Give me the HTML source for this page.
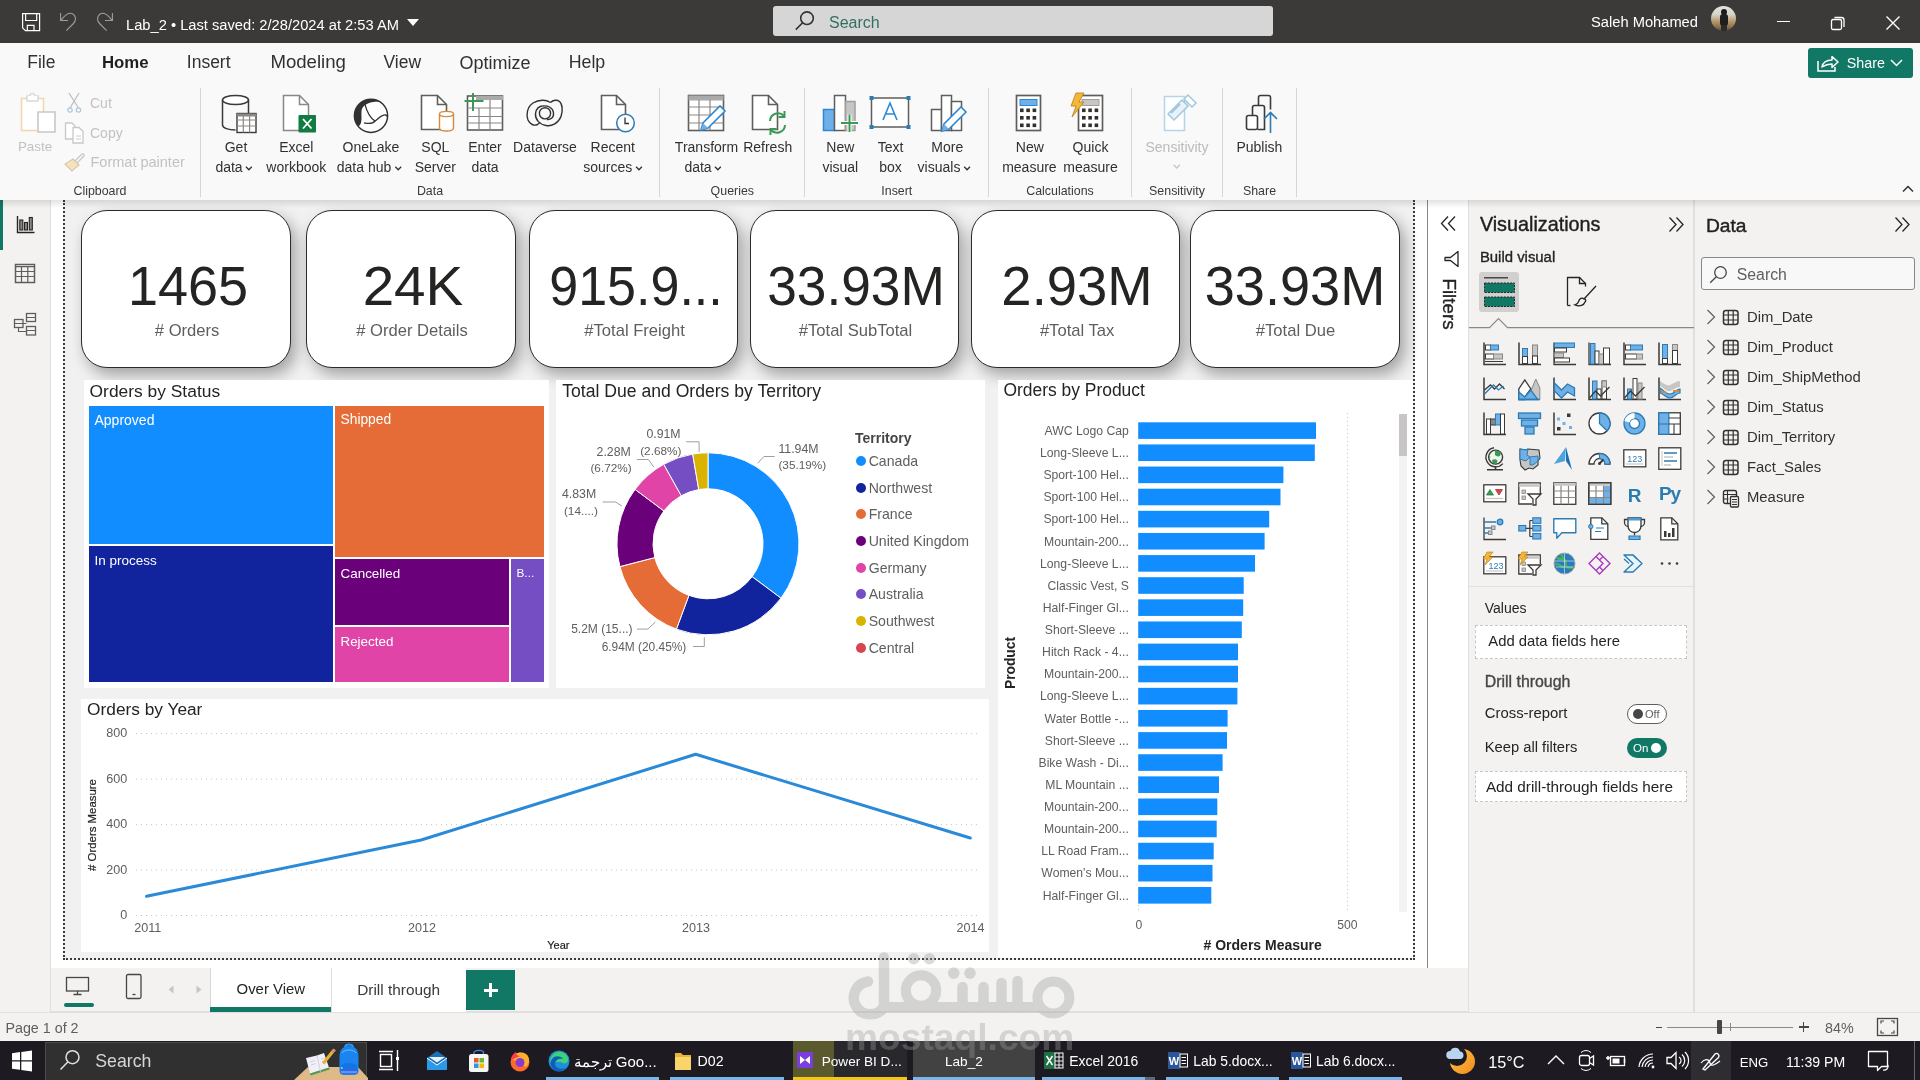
<!DOCTYPE html>
<html><head><meta charset="utf-8">
<style>
*{box-sizing:border-box;margin:0;padding:0}
html,body{width:1920px;height:1080px;overflow:hidden;font-family:"Liberation Sans",sans-serif;background:#fff;position:relative}
.a{position:absolute}
.t{position:absolute;white-space:nowrap;line-height:1}
.c{transform:translateX(-50%)}
.r{transform:translateX(-100%)}
svg{position:absolute;overflow:visible}
body{will-change:transform}

</style></head>
<body>
<div class="a" style="left:0;top:0;width:1920px;height:43px;background:#3b3a39"></div>
 <svg style="left:21px;top:12px" width="20" height="20" viewBox="0 0 20 20" fill="none" stroke="#fff" stroke-width="1.2"><path d="M1.6 1.6h17v17h-14.2l-2.8-2.8z"/><path d="M4.6 1.6v6.9h11.1v-6.9"/><path d="M6.3 18.6v-5.3h6.7v5.3"/></svg>
 <svg style="left:59px;top:12px" width="20" height="20" viewBox="0 0 20 20" fill="none" stroke="#a19f9d" stroke-width="1.1"><path d="M1.6 1v7.5h7.4"/><path d="M1.8 8.3C4 6 7 1.3 11.5 1.3C14.5 1.3 16.5 4 16.5 7C16.5 9 15.5 10.5 14 12L7.3 18.6"/></svg>
 <svg style="left:95px;top:12px" width="20" height="20" viewBox="0 0 20 20" fill="none" stroke="#a19f9d" stroke-width="1.1"><g transform="translate(19 0) scale(-1 1)"><path d="M1.6 1v7.5h7.4"/><path d="M1.8 8.3C4 6 7 1.3 11.5 1.3C14.5 1.3 16.5 4 16.5 7C16.5 9 15.5 10.5 14 12L7.3 18.6"/></g></svg>
 <div class="t" style="left:126px;top:18px;font-size:14.7px;color:#fff">Lab_2 &#8226; Last saved: 2/28/2024 at 2:53 AM</div>
 <svg style="left:407px;top:19px" width="12" height="8" viewBox="0 0 12 8"><path d="M0 0h12l-6 7z" fill="#fff"/></svg>
 <div class="a" style="left:773px;top:6px;width:500px;height:30px;background:#d6d6d6;border-radius:3px"></div>
 <svg style="left:794px;top:10px" width="24" height="22" viewBox="0 0 24 22" fill="none" stroke="#333" stroke-width="1.6"><circle cx="13" cy="8.2" r="6.3"/><path d="M8.6 12.8L1.8 19.6"/></svg>
 <div class="t" style="left:829px;top:14.5px;font-size:16px;color:#336e63">Search</div>
 <div class="t" style="left:1591px;top:14.5px;font-size:14.7px;color:#fff">Saleh Mohamed</div>
 <div class="a" style="left:1711px;top:6px;width:25px;height:25px;border-radius:50%;overflow:hidden;background:linear-gradient(#e4e4e2 0,#d6d2c8 35%,#b89c70 60%,#8a6e48 85%,#5a4a34 100%)"><div class="a" style="left:10px;top:3px;width:6px;height:6px;border-radius:50%;background:#1a1a1a"></div><div class="a" style="left:9px;top:8px;width:8px;height:12px;border-radius:3px;background:#1e1e1e"></div><div class="a" style="left:10px;top:19px;width:6px;height:6px;background:#2a2a2a"></div></div>
 <div class="a" style="left:1777px;top:21px;width:13px;height:1.3px;background:#fff"></div>
 <svg style="left:1830px;top:15px" width="16" height="16" viewBox="0 0 16 16" fill="none" stroke="#fff" stroke-width="1.3"><rect x="1.5" y="4.5" width="10" height="10" rx="1.5"/><path d="M4.5 2.5h7a2.5 2.5 0 0 1 2.5 2.5v7"/></svg>
 <svg style="left:1885px;top:15px" width="16" height="16" viewBox="0 0 16 16" stroke="#fff" stroke-width="1.4"><path d="M1.5 1.5l13 13M14.5 1.5l-13 13"/></svg>

<div class="a" style="left:0px;top:43px;width:1920px;height:157px;background:#f9f9f9;"></div>
<div class="t" style="left:27.3px;top:54.29px;font-size:17.5px;color:#323130;">File</div>
<div class="t" style="left:102.0px;top:54.88px;font-size:16.8px;color:#201f1e;font-weight:bold;">Home</div>
<div class="t" style="left:186.8px;top:54.29px;font-size:17.5px;color:#323130;">Insert</div>
<div class="t" style="left:270.4px;top:53.36px;font-size:18.6px;color:#323130;">Modeling</div>
<div class="t" style="left:383.5px;top:54.29px;font-size:17.5px;color:#323130;">View</div>
<div class="t" style="left:459.5px;top:53.86px;font-size:18.0px;color:#323130;">Optimize</div>
<div class="t" style="left:568.7px;top:54.03px;font-size:17.8px;color:#323130;">Help</div>
<div class="a" style="left:1808px;top:48px;width:105px;height:30px;background:#117865;border-radius:3px"></div>
<svg style="left:1816px;top:54px;" width="24" height="18" viewBox="0 0 24 18"><path d="M2 7v10h17v-4" fill="none" stroke="#fff" stroke-width="1.5"/><path d="M6 13c1-5 5-7 10-7V2.5l6 5.5-6 5.5V10c-4 0-7 1-10 3z" fill="none" stroke="#fff" stroke-width="1.5" stroke-linejoin="round"/></svg>
<div class="t" style="left:1846.7px;top:56.20px;font-size:14.3px;color:#fff;">Share</div>
<svg style="left:1889.5px;top:59px;" width="13" height="8" viewBox="0 0 13 8"><path d="M1 1l5.5 5.5L12 1" fill="none" stroke="#fff" stroke-width="1.5"/></svg>
<div class="a" style="left:200px;top:88px;width:1px;height:109px;background:#d6d6d6;"></div>
<div class="a" style="left:659px;top:88px;width:1px;height:109px;background:#d6d6d6;"></div>
<div class="a" style="left:804px;top:88px;width:1px;height:109px;background:#d6d6d6;"></div>
<div class="a" style="left:988px;top:88px;width:1px;height:109px;background:#d6d6d6;"></div>
<div class="a" style="left:1131px;top:88px;width:1px;height:109px;background:#d6d6d6;"></div>
<div class="a" style="left:1222px;top:88px;width:1px;height:109px;background:#d6d6d6;"></div>
<div class="a" style="left:1296px;top:88px;width:1px;height:109px;background:#d6d6d6;"></div>
<div class="t c" style="left:100.0px;top:184.70px;font-size:12.4px;color:#3b3a39;">Clipboard</div>
<div class="t c" style="left:430.0px;top:184.70px;font-size:12.4px;color:#3b3a39;">Data</div>
<div class="t c" style="left:732.3px;top:184.70px;font-size:12.4px;color:#3b3a39;">Queries</div>
<div class="t c" style="left:896.8px;top:184.70px;font-size:12.4px;color:#3b3a39;">Insert</div>
<div class="t c" style="left:1060.0px;top:184.70px;font-size:12.4px;color:#3b3a39;">Calculations</div>
<div class="t c" style="left:1177.0px;top:184.70px;font-size:12.4px;color:#3b3a39;">Sensitivity</div>
<div class="t c" style="left:1259.5px;top:184.70px;font-size:12.4px;color:#3b3a39;">Share</div>
<svg style="left:18px;top:93px;" width="40" height="42" viewBox="0 0 40 42"><path d="M3.5 5.5h22v32h-22z" fill="#fff" stroke="#f2d6ae" stroke-width="1.6"/><path d="M9 5.5h11v-2.5h-3a2.2 2.2 0 0 0-5 0h-3z" fill="#fff" stroke="#d8d8d8" stroke-width="1.4"/><path d="M9 3v5h11v-5" fill="#fff" stroke="#d8d8d8" stroke-width="1.4"/><path d="M20 19h17v20h-17z" fill="#fff" stroke="#c8c8c8" stroke-width="1.6"/></svg>
<div class="t c" style="left:35.0px;top:140.26px;font-size:13.4px;color:#c4c2c0;">Paste</div>
<svg style="left:66px;top:92px;" width="18" height="22" viewBox="0 0 18 22"><path d="M3 1l9.5 15M13 1L4 16" fill="none" stroke="#bbb" stroke-width="1.2"/><circle cx="4" cy="18" r="2.2" fill="none" stroke="#a9c7dd" stroke-width="1.2"/><circle cx="12.5" cy="18" r="2.2" fill="none" stroke="#a9c7dd" stroke-width="1.2"/></svg>
<div class="t" style="left:90.0px;top:95.75px;font-size:14px;color:#c4c2c0;">Cut</div>
<svg style="left:64px;top:122px;" width="22" height="22" viewBox="0 0 22 22"><path d="M1.5 1h6.5l3 3v13h-9.5z" fill="#fff" stroke="#c8c8c8" stroke-width="1.3"/><path d="M9 5.5h6l4 4v11.5h-10z" fill="#fff" stroke="#c8c8c8" stroke-width="1.3"/><path d="M12 14h5M12 17h5" stroke="#ccc" stroke-width="1"/></svg>
<div class="t" style="left:90.0px;top:125.85px;font-size:14px;color:#c4c2c0;">Copy</div>
<svg style="left:64px;top:152px;" width="22" height="22" viewBox="0 0 22 22"><path d="M11 9l7-7a1.5 1.5 0 0 1 2 2l-7 7" fill="none" stroke="#c8c8c8" stroke-width="1.3"/><path d="M9 7l6 6-7 6-7-7z" fill="#f6e2bd" stroke="#d8c8a8" stroke-width="1.2"/></svg>
<div class="t" style="left:90.5px;top:154.93px;font-size:14.5px;color:#c4c2c0;">Format painter</div>
<svg style="left:220px;top:94px;" width="40" height="42" viewBox="0 0 40 42"><path d="M2.5 6v25c0 3 6 5 13 5" fill="none" stroke="#3b3a39" stroke-width="1.5"/><ellipse cx="15.5" cy="6" rx="13" ry="4.5" fill="#fff" stroke="#3b3a39" stroke-width="1.5"/><path d="M28.5 6v13" stroke="#3b3a39" stroke-width="1.5"/><rect x="17" y="19.5" width="19" height="19" fill="#fff" stroke="#3b3a39" stroke-width="1.4"/><rect x="17" y="19.5" width="19" height="3" fill="#8a8886"/><path d="M17 26h19M17 32h19M23.3 22v16.5M29.6 22v16.5" stroke="#8a8886" stroke-width="1.2"/></svg>
<div class="t c" style="left:236.0px;top:139.75px;font-size:14px;color:#323130;">Get</div>
<div class="t c" style="left:234.0px;top:159.85px;font-size:14px;color:#323130">data<svg style="position:relative;display:inline-block;vertical-align:middle;margin-left:3px" width="7" height="5" viewBox="0 0 7 5"><path d="M0.6 0.8L3.5 3.8L6.4 0.8" fill="none" stroke="#323130" stroke-width="1.3"/></svg></div>
<svg style="left:282px;top:94px;" width="36" height="40" viewBox="0 0 36 40"><path d="M1.5 1.5h16l9 9v26h-25z" fill="#fff" stroke="#8a8886" stroke-width="1.5"/><path d="M17.5 1.5v9h9" fill="none" stroke="#8a8886" stroke-width="1.5"/><rect x="16.5" y="21" width="17.5" height="17.5" rx="1" fill="#107c41"/><path d="M21 25l8.5 9.5M29.5 25l-8.5 9.5" stroke="#fff" stroke-width="1.8"/></svg>
<div class="t c" style="left:296.3px;top:139.75px;font-size:14px;color:#323130;">Excel</div>
<div class="t c" style="left:296.3px;top:159.85px;font-size:14px;color:#323130;">workbook</div>
<svg style="left:0;top:0" width="1920" height="200" viewBox="0 0 1920 200"><circle cx="371" cy="115.8" r="16.6" fill="#fff" stroke="#323130" stroke-width="1.5"/><path d="M379.5 101.5A16.6 16.6 0 0 0 358.3 126.5C363 124 361 116 361.5 111C362 106 367 101.5 379.5 101.5z" fill="#323130"/><path d="M364.8 103.8C367 112 370 118 375 121C379 118 382 114.5 385.5 115C387 115.3 387.5 116 387.5 117" fill="none" stroke="#323130" stroke-width="1.3"/><path d="M364 122.8C369 124 373 123.5 375 121" fill="none" stroke="#323130" stroke-width="1.3"/></svg>
<div class="t c" style="left:371.0px;top:139.75px;font-size:14px;color:#323130;">OneLake</div>
<div class="t c" style="left:369.0px;top:159.85px;font-size:14px;color:#323130">data hub<svg style="position:relative;display:inline-block;vertical-align:middle;margin-left:3px" width="7" height="5" viewBox="0 0 7 5"><path d="M0.6 0.8L3.5 3.8L6.4 0.8" fill="none" stroke="#323130" stroke-width="1.3"/></svg></div>
<svg style="left:420px;top:94px;" width="38" height="40" viewBox="0 0 38 40"><path d="M1.5 1.5h16l9 9v25h-25z" fill="#fff" stroke="#605e5c" stroke-width="1.6"/><path d="M17.5 1.5v9h9" fill="none" stroke="#605e5c" stroke-width="1.6"/><path d="M19.5 20v14c0 2 3.5 3 7 3s7-1 7-3V20" fill="#fff" stroke="#d48c3c" stroke-width="1.4"/><ellipse cx="26.5" cy="20" rx="7" ry="2.6" fill="#fff" stroke="#d48c3c" stroke-width="1.4"/></svg>
<div class="t c" style="left:435.3px;top:139.75px;font-size:14px;color:#323130;">SQL</div>
<div class="t c" style="left:435.3px;top:159.85px;font-size:14px;color:#323130;">Server</div>
<svg style="left:463px;top:92px;" width="44" height="42" viewBox="0 0 44 42"><rect x="4.5" y="4" width="35" height="34" fill="#fff" stroke="#605e5c" stroke-width="1.6"/><rect x="13" y="4" width="27" height="4" fill="#aaa"/><path d="M4.5 16h35M4.5 24.5h35M4.5 31h35M16 16v22M27 16v22M27 8v8" stroke="#8a8886" stroke-width="1.2"/><path d="M1.5 9h19M10 1v18" stroke="#3a9a54" stroke-width="2"/></svg>
<div class="t c" style="left:485.0px;top:139.75px;font-size:14px;color:#323130;">Enter</div>
<div class="t c" style="left:485.0px;top:159.85px;font-size:14px;color:#323130;">data</div>
<svg style="left:520px;top:92px;" width="50" height="42" viewBox="0 0 50 42"><g fill="none" stroke="#323130" stroke-width="1.4"><path d="M30.5 10.5C26 7.5 19 7.5 13 11C7 15 6 23 8 28C10 32.5 14 34 17.5 32.5L19.5 31"/><path d="M30.5 10.5C33 8 37 7.5 39.5 9.5C42.5 12 43 19 41 24.5C38.5 31 32 34.5 26 33.5C19.5 32.5 15 27.5 15.5 21.5C16 16.5 19.5 14 22.5 14"/><path d="M22.5 14C28 13.5 33 15.5 33.5 21C34 26 30 28 27 27.5"/><circle cx="25" cy="21.3" r="5.6"/></g></svg>
<div class="t c" style="left:545.0px;top:139.75px;font-size:14px;color:#323130;">Dataverse</div>
<svg style="left:600px;top:94px;" width="38" height="40" viewBox="0 0 38 40"><path d="M1.5 1.5h15l9 9v25h-24z" fill="#fff" stroke="#605e5c" stroke-width="1.6"/><path d="M16.5 1.5v9h9" fill="none" stroke="#605e5c" stroke-width="1.6"/><circle cx="25.5" cy="29" r="8.8" fill="#fff" stroke="#2b7cb3" stroke-width="1.5"/><path d="M25 23.5v6h4" fill="none" stroke="#323130" stroke-width="1.3"/></svg>
<div class="t c" style="left:612.8px;top:139.75px;font-size:14px;color:#323130;">Recent</div>
<div class="t c" style="left:612.8px;top:159.85px;font-size:14px;color:#323130">sources<svg style="position:relative;display:inline-block;vertical-align:middle;margin-left:3px" width="7" height="5" viewBox="0 0 7 5"><path d="M0.6 0.8L3.5 3.8L6.4 0.8" fill="none" stroke="#323130" stroke-width="1.3"/></svg></div>
<svg style="left:686px;top:93px;" width="42" height="42" viewBox="0 0 42 42"><rect x="2.5" y="2.5" width="35" height="35" fill="#fff" stroke="#605e5c" stroke-width="1.6"/><rect x="2.5" y="2.5" width="35" height="5" fill="#aaa"/><path d="M2.5 14h35M2.5 22h35M2.5 30h35M13 7v30M24 7v30" stroke="#8a8886" stroke-width="1.2"/><path d="M15 37l2-7 17-17 5 5-17 17z" fill="#fff" stroke="#2b88d8" stroke-width="1.6"/><path d="M15 37l2-7 5 5z" fill="#70b0e8"/></svg>
<div class="t c" style="left:706.5px;top:139.75px;font-size:14px;color:#323130;">Transform</div>
<div class="t c" style="left:703.0px;top:159.85px;font-size:14px;color:#323130">data<svg style="position:relative;display:inline-block;vertical-align:middle;margin-left:3px" width="7" height="5" viewBox="0 0 7 5"><path d="M0.6 0.8L3.5 3.8L6.4 0.8" fill="none" stroke="#323130" stroke-width="1.3"/></svg></div>
<svg style="left:751px;top:94px;" width="38" height="40" viewBox="0 0 38 40"><path d="M1.5 1.5h16l9 9v25h-25z" fill="#fff" stroke="#605e5c" stroke-width="1.6"/><path d="M17.5 1.5v9h9" fill="none" stroke="#605e5c" stroke-width="1.6"/><path d="M19 27a8 8 0 0 1 14-5M34 31a8 8 0 0 1-14 5" fill="none" stroke="#3a9a54" stroke-width="2"/><path d="M33.5 17v6h-6M19.5 41v-6h6" fill="none" stroke="#3a9a54" stroke-width="2"/></svg>
<div class="t c" style="left:767.7px;top:139.75px;font-size:14px;color:#323130;">Refresh</div>
<svg style="left:822px;top:94px;" width="38" height="40" viewBox="0 0 38 40"><rect x="1.5" y="15.5" width="11" height="21" fill="#70b0e8" stroke="#2b88d8" stroke-width="1.5"/><rect x="12.5" y="1.5" width="11" height="35" fill="#fff" stroke="#605e5c" stroke-width="1.5"/><rect x="23.5" y="7.5" width="9.5" height="29" fill="#c8c6c4" stroke="#a19f9d" stroke-width="1.5"/><path d="M19 29h17M27.5 20.5v17.5" stroke="#fff" stroke-width="4"/><path d="M19 29h17M27.5 20.5v17.5" stroke="#3a9a54" stroke-width="2"/></svg>
<div class="t c" style="left:840.3px;top:139.75px;font-size:14px;color:#323130;">New</div>
<div class="t c" style="left:840.3px;top:159.85px;font-size:14px;color:#323130;">visual</div>
<svg style="left:869px;top:96px;" width="42" height="34" viewBox="0 0 42 34"><rect x="2.5" y="2" width="37" height="29" fill="#fff" stroke="#605e5c" stroke-width="1.5"/><rect x="0.5" y="0" width="4" height="4" fill="#2b7cb3"/><rect x="37.5" y="0" width="4" height="4" fill="#2b7cb3"/><rect x="0.5" y="29" width="4" height="4" fill="#2b7cb3"/><rect x="37.5" y="29" width="4" height="4" fill="#2b7cb3"/><path d="M14 24l7-17 7 17M16.5 18h9" fill="none" stroke="#2b88d8" stroke-width="1.6"/></svg>
<div class="t c" style="left:890.5px;top:139.75px;font-size:14px;color:#323130;">Text</div>
<div class="t c" style="left:890.5px;top:159.85px;font-size:14px;color:#323130;">box</div>
<svg style="left:930px;top:94px;" width="40" height="40" viewBox="0 0 40 40"><rect x="1.5" y="15.5" width="10" height="21" fill="#fff" stroke="#605e5c" stroke-width="1.5"/><rect x="11.5" y="1.5" width="10" height="35" fill="#fff" stroke="#605e5c" stroke-width="1.5"/><rect x="21.5" y="7.5" width="10" height="29" fill="#fff" stroke="#605e5c" stroke-width="1.5"/><path d="M12 37l2-7 17-17 5 5-17 17z" fill="#fff" stroke="#2b88d8" stroke-width="1.6"/><path d="M12 37l2-7 5 5z" fill="#70b0e8"/></svg>
<div class="t c" style="left:947.3px;top:139.75px;font-size:14px;color:#323130;">More</div>
<div class="t c" style="left:944.0px;top:159.85px;font-size:14px;color:#323130">visuals<svg style="position:relative;display:inline-block;vertical-align:middle;margin-left:3px" width="7" height="5" viewBox="0 0 7 5"><path d="M0.6 0.8L3.5 3.8L6.4 0.8" fill="none" stroke="#323130" stroke-width="1.3"/></svg></div>
<svg style="left:1015px;top:94px;" width="28" height="40" viewBox="0 0 28 40"><rect x="1.5" y="1.5" width="24" height="35" fill="#fff" stroke="#605e5c" stroke-width="1.7"/><rect x="5" y="5.5" width="17" height="6" fill="#70b0e8" stroke="#2b88d8" stroke-width="1"/><rect x="5.0" y="14.5" width="3.6" height="3.6" fill="#323130"/><rect x="11.3" y="14.5" width="3.6" height="3.6" fill="#323130"/><rect x="17.6" y="14.5" width="3.6" height="3.6" fill="#323130"/><rect x="5.0" y="22.0" width="3.6" height="3.6" fill="#323130"/><rect x="11.3" y="22.0" width="3.6" height="3.6" fill="#323130"/><rect x="17.6" y="22.0" width="3.6" height="3.6" fill="#323130"/><rect x="5.0" y="29.5" width="3.6" height="3.6" fill="#323130"/><rect x="11.3" y="29.5" width="3.6" height="3.6" fill="#323130"/><rect x="17.6" y="29.5" width="3.6" height="3.6" fill="#323130"/></svg>
<div class="t c" style="left:1029.8px;top:139.75px;font-size:14px;color:#323130;">New</div>
<div class="t c" style="left:1029.4px;top:159.85px;font-size:14px;color:#323130;">measure</div>
<svg style="left:1068px;top:92px;" width="36" height="42" viewBox="0 0 36 42"><rect x="10.5" y="3.5" width="24" height="35" fill="#fff" stroke="#605e5c" stroke-width="1.7"/><rect x="14" y="7.5" width="17" height="6" fill="#c8c6c4" stroke="#a19f9d" stroke-width="1"/><rect x="14.0" y="16.5" width="3.6" height="3.6" fill="#323130"/><rect x="20.3" y="16.5" width="3.6" height="3.6" fill="#323130"/><rect x="26.6" y="16.5" width="3.6" height="3.6" fill="#323130"/><rect x="14.0" y="24.0" width="3.6" height="3.6" fill="#323130"/><rect x="20.3" y="24.0" width="3.6" height="3.6" fill="#323130"/><rect x="26.6" y="24.0" width="3.6" height="3.6" fill="#323130"/><rect x="14.0" y="31.5" width="3.6" height="3.6" fill="#323130"/><rect x="20.3" y="31.5" width="3.6" height="3.6" fill="#323130"/><rect x="26.6" y="31.5" width="3.6" height="3.6" fill="#323130"/><path d="M8 1h8l-5 9h5l-12 15 4-11h-5z" fill="#f2b63a" stroke="#c07c10" stroke-width="0.8"/></svg>
<div class="t c" style="left:1090.5px;top:139.75px;font-size:14px;color:#323130;">Quick</div>
<div class="t c" style="left:1090.5px;top:159.85px;font-size:14px;color:#323130;">measure</div>
<svg style="left:1161px;top:92px;" width="38" height="42" viewBox="0 0 38 42"><path d="M3.5 4.5h20v34h-20z" fill="#fff" stroke="#b5d6e8" stroke-width="1.6"/><path d="M7 22l14-14 6 6-14 14z" fill="#e8f2f8" stroke="#9fc8de" stroke-width="1.5"/><path d="M10 21l9-9" stroke="#9fc8de" stroke-width="2"/><path d="M23 7l4-4 8 8-4 4z" fill="#fff" stroke="#9fc8de" stroke-width="1.5"/></svg>
<div class="t c" style="left:1177.0px;top:139.75px;font-size:14px;color:#bdbbb9;">Sensitivity</div>
<svg style="left:1173px;top:164px;" width="8" height="6" viewBox="0 0 8 6"><path d="M0.6 0.8L3.8 4L7 0.8" fill="none" stroke="#c8c6c4" stroke-width="1.3"/></svg>
<svg style="left:1244px;top:94px;" width="38" height="42" viewBox="0 0 38 42"><rect x="2.5" y="21.5" width="11" height="14" rx="2" fill="#fff" stroke="#3b3a39" stroke-width="1.6"/><path d="M8.5 21.5v-8a2 2 0 0 1 2-2h8a2 2 0 0 1 2 2v22h-7" fill="none" stroke="#3b3a39" stroke-width="1.6"/><path d="M14.5 11.5v-8a2 2 0 0 1 2-2h8a2 2 0 0 1 2 2v12" fill="none" stroke="#3b3a39" stroke-width="1.6"/><path d="M26.5 39v-20M20 25l6.5-6.5 6.5 6.5" fill="none" stroke="#2b7cb3" stroke-width="1.6"/></svg>
<div class="t c" style="left:1259.4px;top:139.75px;font-size:14px;color:#323130;">Publish</div>
<svg style="left:1902px;top:185px;" width="12" height="8" viewBox="0 0 12 8"><path d="M1 6.5l5-5 5 5" fill="none" stroke="#323130" stroke-width="1.5"/></svg>
<div class="a" style="left:0px;top:200px;width:51px;height:812px;background:#f3f2f1;border-right:1px solid #e1dfdd"></div>
<div class="a" style="left:0px;top:200px;width:3px;height:50px;background:#117865;"></div>
<svg style="left:16px;top:215px;" width="20" height="20" viewBox="0 0 20 20"><path d="M1.5 1v16.5h17" fill="none" stroke="#252423" stroke-width="1.4"/><rect x="3.8" y="5" width="3" height="10" fill="#8a8886" stroke="#252423" stroke-width="1.1"/><rect x="8.5" y="7.5" width="3" height="7.5" fill="#8a8886" stroke="#252423" stroke-width="1.1"/><rect x="13.3" y="2.5" width="3" height="12.5" fill="#8a8886" stroke="#252423" stroke-width="1.1"/></svg>
<svg style="left:14px;top:263px;" width="22" height="21" viewBox="0 0 22 21"><rect x="1.5" y="1.5" width="19" height="18" fill="none" stroke="#605e5c" stroke-width="1.5"/><path d="M1.5 3.6h19M1.5 8.5h19M1.5 13.5h19M7.5 3.6v16M13.8 3.6v16" stroke="#605e5c" stroke-width="1.2"/></svg>
<svg style="left:13px;top:312px;" width="25" height="25" viewBox="0 0 25 25"><rect x="1.5" y="7.5" width="8.5" height="8" fill="none" stroke="#605e5c" stroke-width="1.3"/><rect x="13.5" y="1.5" width="9" height="8" fill="none" stroke="#605e5c" stroke-width="1.3"/><rect x="13.5" y="14.5" width="9" height="8.5" fill="none" stroke="#605e5c" stroke-width="1.3"/><path d="M1.5 11.5h8.5M13.5 5.5h9M13.5 18.5h9M10 11.5h3.5M5.5 15.5v4h8" fill="none" stroke="#605e5c" stroke-width="1.1"/></svg>
<div class="a" style="left:51px;top:200px;width:1376px;height:768px;background:#ffffff;"></div>
<div class="a" style="left:63px;top:200px;width:1352px;height:760px;background:#f1f1f1;border:2px dotted #3a3a3a;border-top:none"></div>
<div class="a" style="left:81px;top:210px;width:210px;height:158px;background:#fff;border:1.5px solid #2b2b2b;border-radius:26px;box-shadow:5px 7px 15px rgba(0,0,0,0.33)"></div>
<div class="a" style="left:306px;top:210px;width:210px;height:158px;background:#fff;border:1.5px solid #2b2b2b;border-radius:26px;box-shadow:5px 7px 15px rgba(0,0,0,0.33)"></div>
<div class="a" style="left:529px;top:210px;width:209px;height:158px;background:#fff;border:1.5px solid #2b2b2b;border-radius:26px;box-shadow:5px 7px 15px rgba(0,0,0,0.33)"></div>
<div class="a" style="left:750px;top:210px;width:209px;height:158px;background:#fff;border:1.5px solid #2b2b2b;border-radius:26px;box-shadow:5px 7px 15px rgba(0,0,0,0.33)"></div>
<div class="a" style="left:971px;top:210px;width:209px;height:158px;background:#fff;border:1.5px solid #2b2b2b;border-radius:26px;box-shadow:5px 7px 15px rgba(0,0,0,0.33)"></div>
<div class="a" style="left:1190px;top:210px;width:210px;height:158px;background:#fff;border:1.5px solid #2b2b2b;border-radius:26px;box-shadow:5px 7px 15px rgba(0,0,0,0.33)"></div>
<div class="t" style="left:188px;top:258.93px;font-size:55.6px;color:#252423;transform:translateX(-50%) scaleX(0.972)">1465</div>
<div class="t c" style="left:187.1px;top:322.55px;font-size:16.6px;color:#605e5c;"># Orders</div>
<div class="t" style="left:412.7px;top:258.93px;font-size:55.6px;color:#252423;transform:translateX(-50%) scaleX(1.018)">24K</div>
<div class="t c" style="left:412.0px;top:322.55px;font-size:16.6px;color:#605e5c;"># Order Details</div>
<div class="t" style="left:635.5px;top:258.93px;font-size:55.6px;color:#252423;transform:translateX(-50%) scaleX(0.936)">915.9...</div>
<div class="t c" style="left:634.6px;top:322.55px;font-size:16.6px;color:#605e5c;">#Total Freight</div>
<div class="t" style="left:855.5px;top:258.93px;font-size:55.6px;color:#252423;transform:translateX(-50%) scaleX(0.958)">33.93M</div>
<div class="t c" style="left:855.5px;top:322.55px;font-size:16.6px;color:#605e5c;">#Total SubTotal</div>
<div class="t" style="left:1076.7px;top:258.93px;font-size:55.6px;color:#252423;transform:translateX(-50%) scaleX(0.979)">2.93M</div>
<div class="t c" style="left:1077.1px;top:322.55px;font-size:16.6px;color:#605e5c;">#Total Tax</div>
<div class="t" style="left:1295.1px;top:258.93px;font-size:55.6px;color:#252423;transform:translateX(-50%) scaleX(0.974)">33.93M</div>
<div class="t c" style="left:1295.5px;top:322.55px;font-size:16.6px;color:#605e5c;">#Total Due</div>
<div class="a" style="left:83.5px;top:380px;width:465.5px;height:308px;background:#fff;"></div>
<div class="a" style="left:556px;top:380px;width:428.8px;height:308.1px;background:#fff;"></div>
<div class="a" style="left:997.5px;top:380px;width:415.5px;height:578px;background:#fff;"></div>
<div class="a" style="left:80.7px;top:698.9px;width:908.6px;height:253.3px;background:#fff;"></div>
<div class="t" style="left:89.6px;top:382.77px;font-size:17.4px;color:#252423;">Orders by Status</div>
<div class="t" style="left:562.2px;top:382.60px;font-size:17.6px;color:#252423;">Total Due and Orders by Territory</div>
<div class="t" style="left:1003.4px;top:382.23px;font-size:17.45px;color:#252423;">Orders by Product</div>
<div class="a" style="left:89px;top:406px;width:454.5px;height:276.5px;background:#fff;"></div>
<div class="a" style="left:89px;top:406px;width:243.9px;height:138px;background:#118dff;"></div>
<div class="t" style="left:94.5px;top:413.15px;font-size:14px;color:#fff;">Approved</div>
<div class="a" style="left:89px;top:546px;width:243.9px;height:136.3px;background:#12239e;"></div>
<div class="t" style="left:94.5px;top:553.57px;font-size:13.5px;color:#fff;">In process</div>
<div class="a" style="left:335px;top:406px;width:208.5px;height:151px;background:#e66c37;"></div>
<div class="t" style="left:340.5px;top:413.32px;font-size:13.8px;color:#fff;">Shipped</div>
<div class="a" style="left:335px;top:559px;width:174px;height:65.6px;background:#6b007b;"></div>
<div class="t" style="left:340.5px;top:566.61px;font-size:13.45px;color:#fff;">Cancelled</div>
<div class="a" style="left:335px;top:627px;width:174px;height:55.3px;background:#e044a7;"></div>
<div class="t" style="left:340.5px;top:634.66px;font-size:13.4px;color:#fff;">Rejected</div>
<div class="a" style="left:511px;top:559px;width:32.5px;height:123.3px;background:#744ec2;"></div>
<div class="t" style="left:516.5px;top:568.01px;font-size:11.8px;color:#fff;">B...</div>
<svg style="left:0;top:0" width="1920" height="1080" viewBox="0 0 1920 1080"><path d="M708.00 452.80A91 91 0 0 1 780.98 598.16L752.11 576.66A55 55 0 0 0 708.00 488.80Z" fill="#118dff" stroke="#fff" stroke-width="1"/><path d="M780.98 598.16A91 91 0 0 1 676.42 629.15L688.91 595.38A55 55 0 0 0 752.11 576.66Z" fill="#12239e" stroke="#fff" stroke-width="1"/><path d="M676.42 629.15A91 91 0 0 1 619.90 566.60L654.75 557.58A55 55 0 0 0 688.91 595.38Z" fill="#e66c37" stroke="#fff" stroke-width="1"/><path d="M619.90 566.60A91 91 0 0 1 635.06 489.39L663.91 510.92A55 55 0 0 0 654.75 557.58Z" fill="#6b007b" stroke="#fff" stroke-width="1"/><path d="M635.06 489.39A91 91 0 0 1 663.76 464.28L681.26 495.74A55 55 0 0 0 663.91 510.92Z" fill="#e044a7" stroke="#fff" stroke-width="1"/><path d="M663.76 464.28A91 91 0 0 1 692.69 454.10L698.75 489.58A55 55 0 0 0 681.26 495.74Z" fill="#744ec2" stroke="#fff" stroke-width="1"/><path d="M692.69 454.10A91 91 0 0 1 708.00 452.80L708.00 488.80A55 55 0 0 0 698.75 489.58Z" fill="#d9b300" stroke="#fff" stroke-width="1"/><polyline points="757.8,463.2 763.9,456.5 774.6,456.5" fill="none" stroke="#a19f9d" stroke-width="1"/><polyline points="686,441.8 699.1,441.8 699.1,451.9" fill="none" stroke="#a19f9d" stroke-width="1"/><polyline points="637,459.5 648.4,459.5 653.9,467.2" fill="none" stroke="#a19f9d" stroke-width="1"/><polyline points="602.6,502 615.7,502 621.8,506" fill="none" stroke="#a19f9d" stroke-width="1"/><polyline points="637,629.1 647.8,629.1 655.4,622" fill="none" stroke="#a19f9d" stroke-width="1"/><polyline points="693,646.5 704.3,646.5 704.3,637.3" fill="none" stroke="#a19f9d" stroke-width="1"/></svg>
<div class="t" style="left:778.4px;top:442.69px;font-size:12.3px;color:#605e5c;">11.94M</div>
<div class="t" style="left:778.4px;top:460.21px;font-size:11.8px;color:#605e5c;">(35.19%)</div>
<div class="t" style="left:646.4px;top:428.29px;font-size:12.3px;color:#605e5c;">0.91M</div>
<div class="t" style="left:640.2px;top:445.51px;font-size:11.8px;color:#605e5c;">(2.68%)</div>
<div class="t" style="left:596.6px;top:446.09px;font-size:12.3px;color:#605e5c;">2.28M</div>
<div class="t" style="left:590.4px;top:463.31px;font-size:11.8px;color:#605e5c;">(6.72%)</div>
<div class="t" style="left:562.0px;top:488.49px;font-size:12.3px;color:#605e5c;">4.83M</div>
<div class="t" style="left:563.9px;top:506.01px;font-size:11.8px;color:#605e5c;">(14....)</div>
<div class="t" style="left:571.2px;top:623.24px;font-size:12px;color:#605e5c;">5.2M (15...)</div>
<div class="t" style="left:601.7px;top:641.63px;font-size:11.9px;color:#605e5c;">6.94M (20.45%)</div>
<div class="t" style="left:855.0px;top:431.45px;font-size:14px;color:#484644;font-weight:bold;">Territory</div>
<div class="a" style="left:855.7px;top:456px;width:10px;height:10px;background:#118dff;border-radius:50%"></div>
<div class="t" style="left:868.7px;top:454.26px;font-size:14.1px;color:#605e5c;">Canada</div>
<div class="a" style="left:855.7px;top:482.6px;width:10px;height:10px;background:#12239e;border-radius:50%"></div>
<div class="t" style="left:868.7px;top:480.86px;font-size:14.1px;color:#605e5c;">Northwest</div>
<div class="a" style="left:855.7px;top:509.20000000000005px;width:10px;height:10px;background:#e66c37;border-radius:50%"></div>
<div class="t" style="left:868.7px;top:507.46px;font-size:14.1px;color:#605e5c;">France</div>
<div class="a" style="left:855.7px;top:535.5px;width:10px;height:10px;background:#6b007b;border-radius:50%"></div>
<div class="t" style="left:868.7px;top:533.76px;font-size:14.1px;color:#605e5c;">United Kingdom</div>
<div class="a" style="left:855.7px;top:562.7px;width:10px;height:10px;background:#e044a7;border-radius:50%"></div>
<div class="t" style="left:868.7px;top:560.96px;font-size:14.1px;color:#605e5c;">Germany</div>
<div class="a" style="left:855.7px;top:589px;width:10px;height:10px;background:#744ec2;border-radius:50%"></div>
<div class="t" style="left:868.7px;top:587.26px;font-size:14.1px;color:#605e5c;">Australia</div>
<div class="a" style="left:855.7px;top:616.1px;width:10px;height:10px;background:#d9b300;border-radius:50%"></div>
<div class="t" style="left:868.7px;top:614.36px;font-size:14.1px;color:#605e5c;">Southwest</div>
<div class="a" style="left:855.7px;top:643px;width:10px;height:10px;background:#d64550;border-radius:50%"></div>
<div class="t" style="left:868.7px;top:641.26px;font-size:14.1px;color:#605e5c;">Central</div>
<div class="t r" style="left:1128.8px;top:424.87px;font-size:12.2px;color:#605e5c;">AWC Logo Cap</div>
<div class="t r" style="left:1128.8px;top:447.00px;font-size:12.2px;color:#605e5c;">Long-Sleeve L...</div>
<div class="t r" style="left:1128.8px;top:469.13px;font-size:12.2px;color:#605e5c;">Sport-100 Hel...</div>
<div class="t r" style="left:1128.8px;top:491.26px;font-size:12.2px;color:#605e5c;">Sport-100 Hel...</div>
<div class="t r" style="left:1128.8px;top:513.39px;font-size:12.2px;color:#605e5c;">Sport-100 Hel...</div>
<div class="t r" style="left:1128.8px;top:535.52px;font-size:12.2px;color:#605e5c;">Mountain-200...</div>
<div class="t r" style="left:1128.8px;top:557.65px;font-size:12.2px;color:#605e5c;">Long-Sleeve L...</div>
<div class="t r" style="left:1128.8px;top:579.78px;font-size:12.2px;color:#605e5c;">Classic Vest, S</div>
<div class="t r" style="left:1128.8px;top:601.91px;font-size:12.2px;color:#605e5c;">Half-Finger Gl...</div>
<div class="t r" style="left:1128.8px;top:624.04px;font-size:12.2px;color:#605e5c;">Short-Sleeve ...</div>
<div class="t r" style="left:1128.8px;top:646.17px;font-size:12.2px;color:#605e5c;">Hitch Rack - 4...</div>
<div class="t r" style="left:1128.8px;top:668.30px;font-size:12.2px;color:#605e5c;">Mountain-200...</div>
<div class="t r" style="left:1128.8px;top:690.43px;font-size:12.2px;color:#605e5c;">Long-Sleeve L...</div>
<div class="t r" style="left:1128.8px;top:712.56px;font-size:12.2px;color:#605e5c;">Water Bottle -...</div>
<div class="t r" style="left:1128.8px;top:734.69px;font-size:12.2px;color:#605e5c;">Short-Sleeve ...</div>
<div class="t r" style="left:1128.8px;top:756.82px;font-size:12.2px;color:#605e5c;">Bike Wash - Di...</div>
<div class="t r" style="left:1128.8px;top:778.95px;font-size:12.2px;color:#605e5c;">ML Mountain ...</div>
<div class="t r" style="left:1128.8px;top:801.08px;font-size:12.2px;color:#605e5c;">Mountain-200...</div>
<div class="t r" style="left:1128.8px;top:823.21px;font-size:12.2px;color:#605e5c;">Mountain-200...</div>
<div class="t r" style="left:1128.8px;top:845.34px;font-size:12.2px;color:#605e5c;">LL Road Fram...</div>
<div class="t r" style="left:1128.8px;top:867.47px;font-size:12.2px;color:#605e5c;">Women's Mou...</div>
<div class="t r" style="left:1128.8px;top:889.60px;font-size:12.2px;color:#605e5c;">Half-Finger Gl...</div>
<svg style="left:0;top:0" width="1920" height="1080" viewBox="0 0 1920 1080"><line x1="1347.4" y1="413" x2="1347.4" y2="913" stroke="#c8c6c4" stroke-width="1" stroke-dasharray="1 3"/><line x1="1138.5" y1="905" x2="1138.5" y2="913" stroke="#c8c6c4" stroke-width="1" stroke-dasharray="1 3"/><rect x="1138.2" y="422.30" width="177.8" height="16.6" fill="#118dff"/><rect x="1138.2" y="444.43" width="176.6" height="16.6" fill="#118dff"/><rect x="1138.2" y="466.56" width="145.2" height="16.6" fill="#118dff"/><rect x="1138.2" y="488.69" width="142.3" height="16.6" fill="#118dff"/><rect x="1138.2" y="510.82" width="131.0" height="16.6" fill="#118dff"/><rect x="1138.2" y="532.95" width="126.4" height="16.6" fill="#118dff"/><rect x="1138.2" y="555.08" width="116.8" height="16.6" fill="#118dff"/><rect x="1138.2" y="577.21" width="105.5" height="16.6" fill="#118dff"/><rect x="1138.2" y="599.34" width="105.0" height="16.6" fill="#118dff"/><rect x="1138.2" y="621.47" width="103.6" height="16.6" fill="#118dff"/><rect x="1138.2" y="643.60" width="99.8" height="16.6" fill="#118dff"/><rect x="1138.2" y="665.73" width="99.8" height="16.6" fill="#118dff"/><rect x="1138.2" y="687.86" width="99.2" height="16.6" fill="#118dff"/><rect x="1138.2" y="709.99" width="89.4" height="16.6" fill="#118dff"/><rect x="1138.2" y="732.12" width="88.8" height="16.6" fill="#118dff"/><rect x="1138.2" y="754.25" width="84.4" height="16.6" fill="#118dff"/><rect x="1138.2" y="776.38" width="80.8" height="16.6" fill="#118dff"/><rect x="1138.2" y="798.51" width="79.1" height="16.6" fill="#118dff"/><rect x="1138.2" y="820.64" width="78.5" height="16.6" fill="#118dff"/><rect x="1138.2" y="842.77" width="75.5" height="16.6" fill="#118dff"/><rect x="1138.2" y="864.90" width="74.3" height="16.6" fill="#118dff"/><rect x="1138.2" y="887.03" width="73.1" height="16.6" fill="#118dff"/></svg>
<div class="t c" style="left:1138.9px;top:918.77px;font-size:12.2px;color:#605e5c;">0</div>
<div class="t c" style="left:1347.4px;top:918.77px;font-size:12.2px;color:#605e5c;">500</div>
<div class="t c" style="left:1262.7px;top:937.95px;font-size:14px;color:#252423;font-weight:bold;"># Orders Measure</div>
<div class="t" style="left:1011px;top:662.5px;font-size:13.8px;color:#252423;font-weight:bold;transform:translate(-50%,-50%) rotate(-90deg)">Product</div>
<div class="a" style="left:1399px;top:414px;width:8px;height:498px;background:#f3f3f3;"></div>
<div class="a" style="left:1399px;top:414px;width:8px;height:42px;background:#c8c6c4;"></div>
<div class="t" style="left:87.1px;top:701.06px;font-size:17.3px;color:#252423;">Orders by Year</div>
<div class="t r" style="left:127.2px;top:727.33px;font-size:12.6px;color:#605e5c;">800</div>
<div class="t r" style="left:127.2px;top:772.93px;font-size:12.6px;color:#605e5c;">600</div>
<div class="t r" style="left:127.2px;top:818.43px;font-size:12.6px;color:#605e5c;">400</div>
<div class="t r" style="left:127.2px;top:863.83px;font-size:12.6px;color:#605e5c;">200</div>
<div class="t r" style="left:127.2px;top:909.33px;font-size:12.6px;color:#605e5c;">0</div>
<svg style="left:0;top:0" width="1920" height="1080" viewBox="0 0 1920 1080"><line x1="136" y1="733.5" x2="981" y2="733.5" stroke="#c8c6c4" stroke-width="1" stroke-dasharray="1 4"/><line x1="136" y1="779.1" x2="981" y2="779.1" stroke="#c8c6c4" stroke-width="1" stroke-dasharray="1 4"/><line x1="136" y1="824.6" x2="981" y2="824.6" stroke="#c8c6c4" stroke-width="1" stroke-dasharray="1 4"/><line x1="136" y1="870" x2="981" y2="870" stroke="#c8c6c4" stroke-width="1" stroke-dasharray="1 4"/><line x1="136" y1="915.5" x2="981" y2="915.5" stroke="#c8c6c4" stroke-width="1" stroke-dasharray="1 4"/><polyline points="146.5,896.3 421.1,840 695.7,754.3 970.3,838" fill="none" stroke="#2b8ad8" stroke-width="3" stroke-linejoin="round" stroke-linecap="round"/></svg>
<div class="t c" style="left:147.7px;top:921.83px;font-size:12.6px;color:#605e5c;">2011</div>
<div class="t c" style="left:422.0px;top:921.83px;font-size:12.6px;color:#605e5c;">2012</div>
<div class="t c" style="left:696.0px;top:921.83px;font-size:12.6px;color:#605e5c;">2013</div>
<div class="t c" style="left:970.6px;top:921.83px;font-size:12.6px;color:#605e5c;">2014</div>
<div class="t c" style="left:558.4px;top:940.49px;font-size:11px;color:#252423;-webkit-text-stroke:0.2px #252423">Year</div>
<div class="t" style="left:92.5px;top:824.8px;font-size:11.4px;color:#252423;-webkit-text-stroke:0.2px #252423;transform:translate(-50%,-50%) rotate(-90deg)"># Orders Measure</div>
<div class="a" style="left:51px;top:968px;width:1417px;height:44px;background:#f3f2f1;border-bottom:1px solid #e1dfdd"></div>
<svg style="left:64px;top:975px;" width="28" height="22" viewBox="0 0 28 22"><rect x="2.5" y="2.5" width="22" height="13.5" fill="none" stroke="#484644" stroke-width="1.3"/><path d="M13.5 16v3M9.5 19.5h8" stroke="#484644" stroke-width="1.3"/></svg>
<div class="a" style="left:64px;top:1003px;width:30px;height:4px;background:#117865;border-radius:2px"></div>
<svg style="left:124px;top:973px;" width="20" height="28" viewBox="0 0 20 28"><rect x="2.5" y="1.5" width="14.5" height="24" rx="1.5" fill="none" stroke="#484644" stroke-width="1.3"/><path d="M8.5 21.5h3" stroke="#484644" stroke-width="1.3"/></svg>
<svg style="left:166px;top:984px;" width="10" height="12" viewBox="0 0 10 12"><path d="M7.5 1.5L2.5 5.5 7.5 9.5z" fill="#c8c6c4"/></svg>
<svg style="left:194px;top:984px;" width="10" height="12" viewBox="0 0 10 12"><path d="M2.5 1.5L7.5 5.5 2.5 9.5z" fill="#c8c6c4"/></svg>
<div class="a" style="left:210px;top:968px;width:121px;height:44px;background:#fff;border-left:1px solid #d6d6d6"></div>
<div class="a" style="left:210px;top:1007px;width:121px;height:5px;background:#117865;"></div>
<div class="t" style="left:236.6px;top:981.99px;font-size:14.9px;color:#252423;">Over View</div>
<div class="a" style="left:331px;top:968px;width:135px;height:44px;background:#fff;border-left:1px solid #e1dfdd"></div>
<div class="t" style="left:357.2px;top:981.56px;font-size:15.4px;color:#3b3a39;">Drill through</div>
<div class="a" style="left:466px;top:970px;width:49px;height:40px;background:#117865;"></div>
<div class="a" style="left:483.5px;top:988.5px;width:14px;height:3px;background:#fff;"></div>
<div class="a" style="left:489px;top:983px;width:3px;height:14px;background:#fff;"></div>
<div class="a" style="left:0px;top:1012px;width:1920px;height:29px;background:#f3f2f1;border-top:1px solid #e1dfdd"></div>
<div class="t" style="left:5.4px;top:1021.30px;font-size:14.3px;color:#605e5c;">Page 1 of 2</div>
<div class="a" style="left:1656px;top:1026.5px;width:5.5px;height:1.5px;background:#484644;"></div>
<div class="a" style="left:1667px;top:1026.5px;width:126px;height:1px;background:#8a8886;"></div>
<div class="a" style="left:1716.5px;top:1020px;width:5px;height:14px;background:#484644;border-radius:1px"></div>
<div class="a" style="left:1730px;top:1023px;width:1px;height:8px;background:#8a8886;"></div>
<div class="a" style="left:1798.5px;top:1026.3px;width:10px;height:1.6px;background:#484644;"></div>
<div class="a" style="left:1802.7px;top:1022px;width:1.6px;height:10px;background:#484644;"></div>
<div class="t" style="left:1825.0px;top:1021.10px;font-size:14.3px;color:#605e5c;">84%</div>
<svg style="left:1876px;top:1017px;" width="24" height="20" viewBox="0 0 24 20"><rect x="1.5" y="1.5" width="20" height="17" fill="none" stroke="#484644" stroke-width="1.3"/><path d="M5 6.5v-2.5h3M15 4h3v2.5M18 13.5v2.5h-3M8 16h-3v-2.5" fill="none" stroke="#484644" stroke-width="1.2"/></svg>
<div class="a" style="left:1427px;top:200px;width:1px;height:768px;background:#8a8886;"></div>
<div class="a" style="left:1428px;top:200px;width:40px;height:768px;background:#ffffff;"></div>
<svg style="left:1440px;top:215px;" width="17" height="17" viewBox="0 0 17 17"><path d="M8 1.5L1.5 8.5 8 15.5M15 1.5L8.5 8.5 15 15.5" fill="none" stroke="#252423" stroke-width="1.3"/></svg>
<svg style="left:1443px;top:250px;" width="17" height="18" viewBox="0 0 17 18"><path d="M2 7.5h5.5l7.5-6v15l-7.5-6h-5.5z" fill="none" stroke="#252423" stroke-width="1.3" stroke-linejoin="round"/></svg>
<div class="t" style="left:1448.7px;top:303.7px;font-size:18.8px;color:#252423;-webkit-text-stroke:0.35px #252423;transform:translate(-50%,-50%) rotate(90deg)">Filters</div>
<div class="a" style="left:1468px;top:200px;width:226px;height:812px;background:#f3f2f1;border-left:1px solid #e1dfdd;border-right:1px solid #e1dfdd"></div>
<div class="t" style="left:1479.9px;top:215.04px;font-size:19.8px;color:#201f1e;-webkit-text-stroke:0.4px #201f1e">Visualizations</div>
<svg style="left:1668px;top:216px;" width="17" height="17" viewBox="0 0 17 17"><path d="M1.5 1.5L8 8.5 1.5 15.5M8.5 1.5L15 8.5 8.5 15.5" fill="none" stroke="#252423" stroke-width="1.3"/></svg>
<div class="t" style="left:1479.9px;top:250.29px;font-size:14.9px;color:#252423;-webkit-text-stroke:0.35px #252423">Build visual</div>
<div class="a" style="left:1479px;top:272px;width:40px;height:39.5px;background:#d2d0ce;border-radius:3px"></div>
<svg style="left:1479px;top:272px;" width="40" height="40" viewBox="0 0 40 40"><path d="M5 5.8h24" stroke="#323130" stroke-width="1.3"/><rect x="5.5" y="11" width="30" height="9.5" fill="#117865" stroke="#252423" stroke-width="1" stroke-dasharray="2 1.2"/><rect x="5.5" y="25" width="30" height="9.5" fill="#117865" stroke="#252423" stroke-width="1" stroke-dasharray="2 1.2"/></svg>
<svg style="left:1565px;top:275px;" width="36" height="36" viewBox="0 0 36 36"><path d="M2.5 30.5v-28h12l6 6v3" fill="none" stroke="#252423" stroke-width="1.3"/><path d="M14.5 2.5v6h6" fill="none" stroke="#252423" stroke-width="1.3"/><path d="M2.5 30.5h3" stroke="#252423" stroke-width="1.3"/><path d="M31 11l-12 13c-1-1-3-1-4 0-2 2-1 5-5 6 5 2 9 0 10-3 1-1 1-2 0-3" fill="none" stroke="#252423" stroke-width="1.3"/></svg>
<svg style="left:1468px;top:315px;" width="227" height="14" viewBox="0 0 227 14"><path d="M1 12.7h20.5l9-9 9 9h187" fill="none" stroke="#8a8886" stroke-width="1.2"/></svg>
<svg style="left:1483px;top:342px;" width="24" height="24" viewBox="0 0 24 24"><path d="M1 0.5v22h22" fill="none" stroke="#3b3a39" stroke-width="1.5"/><rect x="2.5" y="3" width="5" height="5" fill="#fff" stroke="#3b3a39" stroke-width="1"/><rect x="7.5" y="3" width="8" height="5" fill="#70b0e8" stroke="#2b7cb3" stroke-width="1"/><rect x="2.5" y="12" width="8" height="5" fill="#fff" stroke="#3b3a39" stroke-width="1"/><rect x="10.5" y="12" width="9" height="5" fill="#c8c6c4" stroke="#8a8886" stroke-width="1"/><path d="M2 19.5h18" stroke="#3b3a39" stroke-width="1"/></svg>
<svg style="left:1518px;top:342px;" width="24" height="24" viewBox="0 0 24 24"><path d="M1 0.5v22h22" fill="none" stroke="#3b3a39" stroke-width="1.5"/><rect x="4.5" y="6.5" width="5" height="8" fill="#70b0e8" stroke="#2b7cb3" stroke-width="1"/><rect x="4.5" y="14.5" width="5" height="7" fill="#fff" stroke="#3b3a39" stroke-width="1"/><rect x="14.5" y="3" width="5" height="11" fill="#c8c6c4" stroke="#8a8886" stroke-width="1"/><rect x="14.5" y="14" width="5" height="7.5" fill="#fff" stroke="#3b3a39" stroke-width="1"/></svg>
<svg style="left:1553px;top:342px;" width="24" height="24" viewBox="0 0 24 24"><path d="M1 0.5v22h22" fill="none" stroke="#3b3a39" stroke-width="1.3"/><rect x="1.5" y="1" width="20" height="4.5" fill="#70b0e8" stroke="#2b7cb3" stroke-width="1"/><rect x="1.5" y="6" width="12" height="4" fill="#fff" stroke="#3b3a39" stroke-width="1"/><rect x="1.5" y="11" width="9" height="4.5" fill="#c8c6c4" stroke="#8a8886" stroke-width="1"/><rect x="1.5" y="16" width="15" height="4" fill="#fff" stroke="#3b3a39" stroke-width="1"/></svg>
<svg style="left:1588px;top:342px;" width="24" height="24" viewBox="0 0 24 24"><path d="M1 0.5v22h22" fill="none" stroke="#3b3a39" stroke-width="1.3"/><rect x="2.5" y="1.5" width="4.5" height="20.5" fill="#70b0e8" stroke="#2b7cb3" stroke-width="1"/><rect x="7" y="9" width="4" height="13" fill="#fff" stroke="#3b3a39" stroke-width="1"/><rect x="11" y="12" width="4.5" height="10" fill="#c8c6c4" stroke="#8a8886" stroke-width="1"/><rect x="15.5" y="6" width="6" height="16" fill="#fff" stroke="#3b3a39" stroke-width="1"/></svg>
<svg style="left:1623px;top:342px;" width="24" height="24" viewBox="0 0 24 24"><path d="M1 0.5v22h22" fill="none" stroke="#3b3a39" stroke-width="1.5"/><rect x="2.5" y="3" width="5" height="5" fill="#fff" stroke="#3b3a39" stroke-width="1"/><rect x="7.5" y="3" width="12" height="5" fill="#70b0e8" stroke="#2b7cb3" stroke-width="1"/><rect x="2.5" y="12" width="11" height="5" fill="#fff" stroke="#3b3a39" stroke-width="1"/><rect x="13.5" y="12" width="6" height="5" fill="#c8c6c4" stroke="#8a8886" stroke-width="1"/></svg>
<svg style="left:1658px;top:342px;" width="24" height="24" viewBox="0 0 24 24"><path d="M1 0.5v22h22" fill="none" stroke="#3b3a39" stroke-width="1.5"/><rect x="4.5" y="2.5" width="5" height="14" fill="#70b0e8" stroke="#2b7cb3" stroke-width="1"/><rect x="4.5" y="16.5" width="5" height="5" fill="#fff" stroke="#3b3a39" stroke-width="1"/><rect x="14.5" y="2.5" width="5" height="6" fill="#c8c6c4" stroke="#8a8886" stroke-width="1"/><rect x="14.5" y="8.5" width="5" height="13" fill="#fff" stroke="#3b3a39" stroke-width="1"/></svg>
<svg style="left:1483px;top:377px;" width="24" height="24" viewBox="0 0 24 24"><path d="M1 0.5v22h22" fill="none" stroke="#3b3a39" stroke-width="1.5"/><path d="M1.5 13l6-5 4 4 5-5 5 5" fill="none" stroke="#3b3a39" stroke-width="1.3"/><path d="M1.5 17l9-9 5 5 5-4" fill="none" stroke="#2b7cb3" stroke-width="1.3"/></svg>
<svg style="left:1518px;top:377px;" width="24" height="24" viewBox="0 0 24 24"><path d="M0.8 22.5V16l7-10 5 8 5-12 4 9v11.5z" fill="#c8c6c4" stroke="#8a8886" stroke-width="1"/><path d="M0.8 22.5V12l6-9 6 9-6 8 0 2.5z" fill="#fff" stroke="#3b3a39" stroke-width="1.3"/><path d="M0.8 22.5V15l6 5 6-7 7 9.5z" fill="#70b0e8" stroke="#2b7cb3" stroke-width="1.3"/><path d="M0.8 22.5h21" stroke="#2b7cb3" stroke-width="1.5"/></svg>
<svg style="left:1553px;top:377px;" width="24" height="24" viewBox="0 0 24 24"><path d="M1 0.5v22h22" fill="none" stroke="#3b3a39" stroke-width="1.5"/><path d="M1.5 6l7 7 6-6 7 4v8l-7-4-6 6-7-7z" fill="#70b0e8" stroke="#2b7cb3" stroke-width="1.3"/></svg>
<svg style="left:1588px;top:377px;" width="24" height="24" viewBox="0 0 24 24"><path d="M1 0.5v22h22" fill="none" stroke="#3b3a39" stroke-width="1.5"/><rect x="4.5" y="4" width="4.5" height="18" fill="#70b0e8" stroke="#2b7cb3" stroke-width="1"/><rect x="9" y="12" width="4" height="10" fill="#fff" stroke="#3b3a39" stroke-width="1"/><rect x="14" y="4" width="4.5" height="18" fill="#fff" stroke="#3b3a39" stroke-width="1"/><rect x="14" y="4" width="4.5" height="6" fill="#c8c6c4" stroke="#8a8886" stroke-width="1"/><path d="M1.5 21l6-7 5 5 9-9" fill="none" stroke="#3b3a39" stroke-width="1.3"/></svg>
<svg style="left:1623px;top:377px;" width="24" height="24" viewBox="0 0 24 24"><path d="M1 0.5v22h22" fill="none" stroke="#3b3a39" stroke-width="1.5"/><rect x="4.5" y="12" width="4" height="10" fill="#70b0e8" stroke="#2b7cb3" stroke-width="1"/><rect x="10" y="1.5" width="4" height="20.5" fill="#fff" stroke="#3b3a39" stroke-width="1"/><rect x="15" y="6" width="4" height="16" fill="#c8c6c4" stroke="#8a8886" stroke-width="1"/><path d="M1.5 21l6-7 5 5 9-9" fill="none" stroke="#3b3a39" stroke-width="1.3"/></svg>
<svg style="left:1658px;top:377px;" width="24" height="24" viewBox="0 0 24 24"><path d="M1 0.5v22h22" fill="none" stroke="#3b3a39" stroke-width="1.5"/><path d="M2 4c4 3 7 5 10 4s6-4 10-4v6c-4 0-7 3-10 4S6 11 2 9z" fill="#c8c6c4"/><path d="M2 11c4 2 5 6 10 6s6-5 10-5v4c-4 0-6 5-10 5s-6-4-10-5z" fill="#70b0e8" stroke="#2b7cb3" stroke-width="1.2"/><path d="M3 15h5M15 14h6" stroke="#d48c3c" stroke-width="2.2"/></svg>
<svg style="left:1483px;top:412px;" width="24" height="24" viewBox="0 0 24 24"><path d="M1 0.5v22h22" fill="none" stroke="#3b3a39" stroke-width="1.5"/><rect x="3.5" y="7" width="4" height="15" fill="#fff" stroke="#3b3a39" stroke-width="1"/><rect x="7.5" y="7" width="5" height="6" fill="#8a8886" stroke="#3b3a39" stroke-width="1"/><rect x="12.5" y="2" width="5" height="11" fill="#70b0e8" stroke="#2b7cb3" stroke-width="1"/><rect x="17.5" y="2" width="4" height="20" fill="#fff" stroke="#3b3a39" stroke-width="1"/></svg>
<svg style="left:1518px;top:412px;" width="24" height="24" viewBox="0 0 24 24"><rect x="0.5" y="1" width="22" height="5.5" fill="#70b0e8" stroke="#2b7cb3" stroke-width="1.3"/><rect x="3.5" y="8" width="16" height="6" fill="#70b0e8" stroke="#2b7cb3" stroke-width="1.3"/><rect x="7" y="15" width="9" height="7" fill="#70b0e8" stroke="#2b7cb3" stroke-width="1.3"/></svg>
<svg style="left:1553px;top:412px;" width="24" height="24" viewBox="0 0 24 24"><path d="M1 0.5v22h22" fill="none" stroke="#3b3a39" stroke-width="1.5"/><rect x="14" y="1.5" width="3.5" height="3.5" fill="#3b3a39"/><rect x="4" y="5.5" width="3" height="3" fill="#70b0e8"/><rect x="9.5" y="10" width="3" height="3" fill="#70b0e8"/><rect x="4" y="15" width="3.5" height="3.5" fill="#3b3a39"/><rect x="16" y="14" width="3" height="3" fill="#70b0e8"/></svg>
<svg style="left:1588px;top:412px;" width="24" height="24" viewBox="0 0 24 24"><circle cx="11.5" cy="11.5" r="10.5" fill="#fff" stroke="#3b3a39" stroke-width="1.3"/><path d="M11.5 1a10.5 10.5 0 0 1 7.5 17.8L11.5 11.5z" fill="#70b0e8" stroke="#2b7cb3" stroke-width="1.3"/></svg>
<svg style="left:1623px;top:412px;" width="24" height="24" viewBox="0 0 24 24"><circle cx="11.5" cy="11.5" r="10.5" fill="#70b0e8" stroke="#2b7cb3" stroke-width="1.3"/><circle cx="11.5" cy="11.5" r="5" fill="#fff" stroke="#2b7cb3" stroke-width="1.3"/><path d="M11.5 1a10.5 10.5 0 0 0-10.2 8l5.4 1.5A5 5 0 0 1 11.5 6.5z" fill="#fff"/></svg>
<svg style="left:1658px;top:412px;" width="24" height="24" viewBox="0 0 24 24"><rect x="0.8" y="0.8" width="21.5" height="21.5" fill="#fff" stroke="#3b3a39" stroke-width="1.3"/><rect x="0.8" y="0.8" width="10" height="21.5" fill="#70b0e8" stroke="#2b7cb3" stroke-width="1.3"/><path d="M10.8 6h11.5M10.8 12h11.5M16 12v10" stroke="#3b3a39" stroke-width="1.1"/><path d="M0.8 12h10" stroke="#2b7cb3" stroke-width="1.1"/></svg>
<svg style="left:1483px;top:447px;" width="24" height="24" viewBox="0 0 24 24"><circle cx="12.6" cy="10.1" r="7" fill="#eaf7ec" stroke="#3b3a39" stroke-width="1.4"/><path d="M12 4c2-1 5 0 6 2l-1 3c-2 1-4 0-5-1zM9 13c2-1 4-1 5 0s0 3-1 4c-2 0-4-1-4-4zM6.5 8c1 1 1 3 0 4" fill="#3a9a54"/><path d="M11 0.8A9.6 9.6 0 1 0 19.8 16.6" fill="none" stroke="#3b3a39" stroke-width="1.4"/><path d="M12.5 19v3.2M4 22.7h16" stroke="#3b3a39" stroke-width="1.6"/></svg>
<svg style="left:1518px;top:447px;" width="24" height="24" viewBox="0 0 24 24"><path d="M2 2l6 1 2-1 11 1 1 8-2 3 0 4-5 4-4-1-4 2-4-4-1-6z" fill="#c8c6c4" stroke="#3b3a39" stroke-width="1.1"/><path d="M2 2l6 1 2-1-1 6 3 2-4 4-6-2z" fill="#70b0e8" stroke="#2b7cb3" stroke-width="1"/><path d="M12 10l8-1 0 5-5 4-3 0z" fill="#70b0e8" stroke="#2b7cb3" stroke-width="1"/></svg>
<svg style="left:1553px;top:447px;" width="24" height="24" viewBox="0 0 24 24"><path d="M13 0L1 17l11-3z" fill="#4aa3df"/><path d="M13 0l0 14 6 9z" fill="#1b6fb6"/></svg>
<svg style="left:1588px;top:447px;" width="24" height="24" viewBox="0 0 24 24"><path d="M1 17a10.5 10.5 0 0 1 21 0h-5a5.5 5.5 0 0 0-11 0z" fill="#fff" stroke="#3b3a39" stroke-width="1.3"/><path d="M11.5 6.5a10.5 10.5 0 0 1 10.5 10.5h-5a5.5 5.5 0 0 0-5.5-5.5z" fill="#70b0e8" stroke="#2b7cb3" stroke-width="1.2"/><path d="M11.5 16.5l4-4" stroke="#3b3a39" stroke-width="2"/><circle cx="11.5" cy="16.5" r="1.5" fill="#3b3a39"/></svg>
<svg style="left:1623px;top:447px;" width="24" height="24" viewBox="0 0 24 24"><rect x="0.8" y="2.8" width="22" height="17" fill="#fff" stroke="#3b3a39" stroke-width="1.3"/><text x="11.8" y="14.5" font-size="9" font-family="Liberation Sans" fill="#2b7cb3" text-anchor="middle">123</text><path d="M3 17h17" stroke="#c8c6c4" stroke-width="1.2"/></svg>
<svg style="left:1658px;top:447px;" width="24" height="24" viewBox="0 0 24 24"><rect x="0.8" y="0.8" width="22" height="21.5" fill="#fff" stroke="#3b3a39" stroke-width="1.3"/><path d="M4 4v15" stroke="#c8c6c4" stroke-width="1"/><path d="M6 6h13M6 14h13" stroke="#2b7cb3" stroke-width="1.6"/><path d="M6 10h9M6 18h7" stroke="#c8c6c4" stroke-width="1.4"/></svg>
<svg style="left:1483px;top:482px;" width="24" height="24" viewBox="0 0 24 24"><rect x="0.8" y="2.8" width="22" height="17" fill="#fff" stroke="#3b3a39" stroke-width="1.3"/><path d="M3.5 13l3.5-5.5 3.5 5.5z" fill="#3a9a54" stroke="#2d7a44" stroke-width="0.8"/><path d="M12.5 7.5h7l-3.5 5.5z" fill="#d64550" stroke="#b03030" stroke-width="0.8"/><path d="M3 16.5h17" stroke="#c8c6c4" stroke-width="1.3"/></svg>
<svg style="left:1518px;top:482px;" width="24" height="24" viewBox="0 0 24 24"><path d="M14 22H0.8V0.8h21.5V12" fill="#fff" stroke="#3b3a39" stroke-width="1.3"/><path d="M0.8 3.5h21.5" stroke="#c8c6c4" stroke-width="2.5"/><rect x="4" y="8" width="3.5" height="3.5" fill="#c8c6c4" stroke="#8a8886" stroke-width="0.8"/><rect x="4" y="14" width="3.5" height="3.5" fill="#c8c6c4" stroke="#8a8886" stroke-width="0.8"/><path d="M10 12h13l-5 5v6h-3v-6z" fill="#fff" stroke="#3b3a39" stroke-width="1.3"/></svg>
<svg style="left:1553px;top:482px;" width="24" height="24" viewBox="0 0 24 24"><rect x="0.8" y="0.8" width="22" height="21.5" fill="#fff" stroke="#3b3a39" stroke-width="1.3"/><rect x="0.8" y="0.8" width="22" height="3" fill="#c8c6c4"/><path d="M0.8 9h22M0.8 15.5h22M8 3.8v18.5M15.5 3.8v18.5" stroke="#8a8886" stroke-width="1.2"/></svg>
<svg style="left:1588px;top:482px;" width="24" height="24" viewBox="0 0 24 24"><rect x="0.8" y="0.8" width="22" height="21.5" fill="#fff" stroke="#3b3a39" stroke-width="1.3"/><rect x="15.5" y="3.8" width="7" height="18.5" fill="#70b0e8"/><rect x="0.8" y="15.5" width="22" height="6.8" fill="#70b0e8"/><rect x="0.8" y="0.8" width="22" height="3" fill="#c8c6c4"/><path d="M0.8 9h22M0.8 15.5h22M8 3.8v18.5M15.5 3.8v18.5" stroke="#8a8886" stroke-width="1.2"/><rect x="0.8" y="0.8" width="22" height="21.5" fill="none" stroke="#3b3a39" stroke-width="1.3"/></svg>
<svg style="left:1623px;top:482px;" width="24" height="24" viewBox="0 0 24 24"><text x="11.5" y="19.5" font-size="19" font-weight="bold" font-family="Liberation Sans" fill="#2b7cb3" text-anchor="middle">R</text></svg>
<svg style="left:1658px;top:482px;" width="24" height="24" viewBox="0 0 24 24"><text x="11.5" y="17.5" font-size="19" font-weight="bold" font-family="Liberation Sans" fill="#2b7cb3" text-anchor="middle" letter-spacing="-1">Py</text></svg>
<svg style="left:1483px;top:517px;" width="24" height="24" viewBox="0 0 24 24"><path d="M1 0.5v22h22" fill="none" stroke="#3b3a39" stroke-width="1.3"/><path d="M1 5h12M1 11h7M1 16h4" stroke="#2b7cb3" stroke-width="1.3"/><circle cx="17" cy="5" r="2.8" fill="#70b0e8" stroke="#2b7cb3" stroke-width="1.3"/><rect x="8.5" y="9" width="3.5" height="3.5" fill="#c8c6c4" stroke="#8a8886" stroke-width="1"/><rect x="5.5" y="14" width="3.5" height="3.5" fill="#c8c6c4" stroke="#8a8886" stroke-width="1"/></svg>
<svg style="left:1518px;top:517px;" width="24" height="24" viewBox="0 0 24 24"><rect x="0.8" y="8.5" width="7" height="5.5" fill="#70b0e8" stroke="#2b7cb3" stroke-width="1.1"/><path d="M7.8 11.3h4M11.8 3.5v16M11.8 3.5h3M11.8 11.3h3M11.8 19.5h3" fill="none" stroke="#3b3a39" stroke-width="1.2"/><rect x="14.8" y="0.8" width="8" height="5.5" fill="#70b0e8" stroke="#2b7cb3" stroke-width="1.1"/><rect x="14.8" y="8.5" width="8" height="5.5" fill="#70b0e8" stroke="#2b7cb3" stroke-width="1.1"/><rect x="14.8" y="16.5" width="8" height="5.5" fill="#70b0e8" stroke="#2b7cb3" stroke-width="1.1"/></svg>
<svg style="left:1553px;top:517px;" width="24" height="24" viewBox="0 0 24 24"><path d="M0.8 1.8h22v14h-14l-5 5.5v-5.5h-3z" fill="#fff" stroke="#2b7cb3" stroke-width="1.4" stroke-linejoin="round"/></svg>
<svg style="left:1588px;top:517px;" width="24" height="24" viewBox="0 0 24 24"><path d="M2.8 0.8h11l6 6v15.5h-17z" fill="#fff" stroke="#3b3a39" stroke-width="1.3"/><path d="M13.8 0.8v6h6" fill="none" stroke="#3b3a39" stroke-width="1.3"/><circle cx="2.8" cy="9.5" r="2.2" fill="#70b0e8" stroke="#2b7cb3" stroke-width="1"/><path d="M8 11h8M7 14.5h6" stroke="#2b7cb3" stroke-width="1.2"/></svg>
<svg style="left:1623px;top:517px;" width="24" height="24" viewBox="0 0 24 24"><path d="M5 1h13v8a6.5 6.5 0 0 1-13 0z" fill="#fff" stroke="#3b3a39" stroke-width="1.3"/><path d="M5 2.5H1.5v3a4 4 0 0 0 4 4M18 2.5h3.5v3a4 4 0 0 1-4 4M11.5 15.5v3" fill="none" stroke="#3b3a39" stroke-width="1.3"/><path d="M5 1h13v2H5z" fill="#70b0e8" stroke="#2b7cb3" stroke-width="0.8"/><path d="M6 22.5h11v-3.5H6z" fill="#70b0e8" stroke="#2b7cb3" stroke-width="1.2"/></svg>
<svg style="left:1658px;top:517px;" width="24" height="24" viewBox="0 0 24 24"><path d="M2.8 0.8h11l6 6v16h-17z" fill="#fff" stroke="#3b3a39" stroke-width="1.3"/><path d="M13.8 0.8v6h6" fill="none" stroke="#3b3a39" stroke-width="1.3"/><rect x="6" y="14" width="2.5" height="6" fill="#3b3a39"/><rect x="10" y="16" width="2.5" height="4" fill="#3b3a39"/><rect x="14" y="11" width="2.5" height="9" fill="#3b3a39"/></svg>
<svg style="left:1483px;top:552px;" width="24" height="24" viewBox="0 0 24 24"><rect x="0.8" y="4.8" width="22" height="17" fill="#fff" stroke="#3b3a39" stroke-width="1.3"/><text x="13" y="16.5" font-size="9" font-family="Liberation Sans" fill="#2b7cb3" text-anchor="middle">123</text><path d="M3 19h17" stroke="#c8c6c4" stroke-width="1.2"/><path d="M4 0h6l-4 5h4l-8 8 2-6H0z" fill="#f2b63a" stroke="#c07c10" stroke-width="0.6"/></svg>
<svg style="left:1518px;top:552px;" width="24" height="24" viewBox="0 0 24 24"><path d="M14 22H0.8V2.8h21.5V12" fill="#fff" stroke="#3b3a39" stroke-width="1.3"/><path d="M5 5.5h17" stroke="#c8c6c4" stroke-width="2.5"/><rect x="4" y="10" width="3.5" height="3.5" fill="#c8c6c4" stroke="#8a8886" stroke-width="0.8"/><rect x="4" y="16" width="3.5" height="3.5" fill="#c8c6c4" stroke="#8a8886" stroke-width="0.8"/><path d="M10 13h13l-5 5v5h-3v-5z" fill="#fff" stroke="#3b3a39" stroke-width="1.3"/><path d="M4 0h6l-4 5h4l-8 8 2-6H0z" fill="#f2b63a" stroke="#c07c10" stroke-width="0.6"/></svg>
<svg style="left:1553px;top:552px;" width="24" height="24" viewBox="0 0 24 24"><circle cx="11.5" cy="11.5" r="10.5" fill="#2d7ac0" stroke="#9aa" stroke-width="1"/><path d="M4 6c3 2 6 0 8 2s-1 5 2 7 5-1 7 1M2 12c4-1 5 3 9 3M8 2c1 4 4 4 4 8" fill="none" stroke="#49b35a" stroke-width="2.2"/><path d="M2 9h19M3 15h17M11.5 1v21" stroke="#d8f0ff" stroke-width="0.6"/></svg>
<svg style="left:1588px;top:552px;" width="24" height="24" viewBox="0 0 24 24"><path d="M11.5 1l10.5 10.5-10.5 10.5L1 11.5z" fill="none" stroke="#a73cc0" stroke-width="1.4"/><path d="M8 4.5l7 7-7 7M15 4.5l-3.5 3.5M15 18.5l-3.5-3.5" fill="none" stroke="#a73cc0" stroke-width="1.4"/></svg>
<svg style="left:1623px;top:552px;" width="24" height="24" viewBox="0 0 24 24"><path d="M1 3h9l9 8.5-9 8.5H1l9-8.5z" fill="#e8f4fc" stroke="#2b7cb3" stroke-width="1.4" stroke-linejoin="round"/><path d="M6 11.5l-5-4.5M10 3l4 4" fill="none" stroke="#2b7cb3" stroke-width="1.2"/></svg>
<svg style="left:1658px;top:552px;" width="24" height="24" viewBox="0 0 24 24"><circle cx="4" cy="11.5" r="1.3" fill="#3b3a39"/><circle cx="11.5" cy="11.5" r="1.3" fill="#3b3a39"/><circle cx="19" cy="11.5" r="1.3" fill="#3b3a39"/></svg>
<div class="a" style="left:1469px;top:586px;width:225px;height:1px;background:#e1dfdd;"></div>
<div class="t" style="left:1484.7px;top:601.15px;font-size:14px;color:#252423;">Values</div>
<div class="a" style="left:1474.5px;top:624.5px;width:212px;height:34px;background:#fff;border:1px dashed #c8c6c4"></div>
<div class="t" style="left:1488.3px;top:634.07px;font-size:14.8px;color:#252423;">Add data fields here</div>
<div class="t" style="left:1484.7px;top:674.24px;font-size:15.9px;color:#484644;-webkit-text-stroke:0.35px #484644">Drill through</div>
<div class="t" style="left:1484.7px;top:706.09px;font-size:14.9px;color:#252423;">Cross-report</div>
<div class="a" style="left:1627.2px;top:704.4px;width:39.5px;height:19.5px;background:#fff;border:1px solid #605e5c;border-radius:10px"></div>
<div class="a" style="left:1632.5px;top:709px;width:10px;height:10px;background:#484644;border-radius:50%"></div>
<div class="t" style="left:1645.0px;top:709.39px;font-size:11px;color:#605e5c;">Off</div>
<div class="t" style="left:1484.7px;top:740.41px;font-size:14.75px;color:#252423;">Keep all filters</div>
<div class="a" style="left:1627.2px;top:738.2px;width:39.5px;height:19.5px;background:#117865;border-radius:10px"></div>
<div class="a" style="left:1650.7px;top:742.8px;width:10px;height:10px;background:#fff;border-radius:50%"></div>
<div class="t" style="left:1633.0px;top:742.77px;font-size:11.5px;color:#fff;">On</div>
<div class="a" style="left:1474.5px;top:771.2px;width:212px;height:31px;background:#fff;border:1px dashed #c8c6c4"></div>
<div class="t" style="left:1485.9px;top:778.65px;font-size:15.3px;color:#252423;">Add drill-through fields here</div>
<div class="a" style="left:1694px;top:200px;width:226px;height:812px;background:#f3f2f1;border-left:1px solid #e1dfdd"></div>
<div class="t" style="left:1705.9px;top:215.95px;font-size:19.2px;color:#201f1e;-webkit-text-stroke:0.4px #201f1e">Data</div>
<svg style="left:1894px;top:216px;" width="17" height="17" viewBox="0 0 17 17"><path d="M1.5 1.5L8 8.5 1.5 15.5M8.5 1.5L15 8.5 8.5 15.5" fill="none" stroke="#252423" stroke-width="1.3"/></svg>
<div class="a" style="left:1700.5px;top:257.2px;width:214px;height:32.5px;background:#f8f8f8;border:1px solid #8a8886;border-radius:3px"></div>
<svg style="left:1708px;top:264px;" width="20" height="22" viewBox="0 0 20 22"><circle cx="12.5" cy="8.5" r="5.8" fill="none" stroke="#484644" stroke-width="1.3"/><path d="M8.3 12.7L2.2 18.8" stroke="#484644" stroke-width="1.3"/></svg>
<div class="t" style="left:1736.8px;top:267.43px;font-size:15.8px;color:#605e5c;">Search</div>
<svg style="left:1706px;top:308.9px;" width="10" height="16" viewBox="0 0 10 16"><path d="M1.5 1l7 7-7 7" fill="none" stroke="#605e5c" stroke-width="1.2"/></svg>
<svg style="left:1722px;top:308.9px;" width="18" height="17" viewBox="0 0 18 17"><rect x="1.5" y="1.5" width="14.5" height="14" rx="2.5" fill="none" stroke="#323130" stroke-width="1.5"/><path d="M1.5 6h14.5M1.5 11h14.5M6.3 1.5v14M11.2 1.5v14" stroke="#323130" stroke-width="1.2"/></svg>
<div class="t" style="left:1747.0px;top:309.63px;font-size:14.85px;color:#323130;">Dim_Date</div>
<svg style="left:1706px;top:338.9px;" width="10" height="16" viewBox="0 0 10 16"><path d="M1.5 1l7 7-7 7" fill="none" stroke="#605e5c" stroke-width="1.2"/></svg>
<svg style="left:1722px;top:338.9px;" width="18" height="17" viewBox="0 0 18 17"><rect x="1.5" y="1.5" width="14.5" height="14" rx="2.5" fill="none" stroke="#323130" stroke-width="1.5"/><path d="M1.5 6h14.5M1.5 11h14.5M6.3 1.5v14M11.2 1.5v14" stroke="#323130" stroke-width="1.2"/></svg>
<div class="t" style="left:1747.0px;top:339.63px;font-size:14.85px;color:#323130;">Dim_Product</div>
<svg style="left:1706px;top:368.9px;" width="10" height="16" viewBox="0 0 10 16"><path d="M1.5 1l7 7-7 7" fill="none" stroke="#605e5c" stroke-width="1.2"/></svg>
<svg style="left:1722px;top:368.9px;" width="18" height="17" viewBox="0 0 18 17"><rect x="1.5" y="1.5" width="14.5" height="14" rx="2.5" fill="none" stroke="#323130" stroke-width="1.5"/><path d="M1.5 6h14.5M1.5 11h14.5M6.3 1.5v14M11.2 1.5v14" stroke="#323130" stroke-width="1.2"/></svg>
<div class="t" style="left:1747.0px;top:369.63px;font-size:14.85px;color:#323130;">Dim_ShipMethod</div>
<svg style="left:1706px;top:398.9px;" width="10" height="16" viewBox="0 0 10 16"><path d="M1.5 1l7 7-7 7" fill="none" stroke="#605e5c" stroke-width="1.2"/></svg>
<svg style="left:1722px;top:398.9px;" width="18" height="17" viewBox="0 0 18 17"><rect x="1.5" y="1.5" width="14.5" height="14" rx="2.5" fill="none" stroke="#323130" stroke-width="1.5"/><path d="M1.5 6h14.5M1.5 11h14.5M6.3 1.5v14M11.2 1.5v14" stroke="#323130" stroke-width="1.2"/></svg>
<div class="t" style="left:1747.0px;top:399.63px;font-size:14.85px;color:#323130;">Dim_Status</div>
<svg style="left:1706px;top:428.9px;" width="10" height="16" viewBox="0 0 10 16"><path d="M1.5 1l7 7-7 7" fill="none" stroke="#605e5c" stroke-width="1.2"/></svg>
<svg style="left:1722px;top:428.9px;" width="18" height="17" viewBox="0 0 18 17"><rect x="1.5" y="1.5" width="14.5" height="14" rx="2.5" fill="none" stroke="#323130" stroke-width="1.5"/><path d="M1.5 6h14.5M1.5 11h14.5M6.3 1.5v14M11.2 1.5v14" stroke="#323130" stroke-width="1.2"/></svg>
<div class="t" style="left:1747.0px;top:429.63px;font-size:14.85px;color:#323130;">Dim_Territory</div>
<svg style="left:1706px;top:458.9px;" width="10" height="16" viewBox="0 0 10 16"><path d="M1.5 1l7 7-7 7" fill="none" stroke="#605e5c" stroke-width="1.2"/></svg>
<svg style="left:1722px;top:458.9px;" width="18" height="17" viewBox="0 0 18 17"><rect x="1.5" y="1.5" width="14.5" height="14" rx="2.5" fill="none" stroke="#323130" stroke-width="1.5"/><path d="M1.5 6h14.5M1.5 11h14.5M6.3 1.5v14M11.2 1.5v14" stroke="#323130" stroke-width="1.2"/></svg>
<div class="t" style="left:1747.0px;top:459.63px;font-size:14.85px;color:#323130;">Fact_Sales</div>
<svg style="left:1706px;top:488.9px;" width="10" height="16" viewBox="0 0 10 16"><path d="M1.5 1l7 7-7 7" fill="none" stroke="#605e5c" stroke-width="1.2"/></svg>
<svg style="left:1722px;top:488.9px;" width="20" height="19" viewBox="0 0 20 19"><rect x="1.5" y="1.5" width="13" height="13" rx="2" fill="none" stroke="#323130" stroke-width="1.4"/><path d="M1.5 5.5h13M5.5 1.5v13M1.5 10h5" stroke="#323130" stroke-width="1.1"/><rect x="8.5" y="7.5" width="8" height="10.5" rx="1" fill="#f3f2f1" stroke="#323130" stroke-width="1.3"/><path d="M10 10.5h5M10 13h5M10 15.5h5" stroke="#323130" stroke-width="1.1"/></svg>
<div class="t" style="left:1747.0px;top:489.63px;font-size:14.85px;color:#323130;">Measure</div>
<div class="a" style="left:0px;top:1041px;width:1920px;height:39px;background:#1d1b21;"></div>
<svg style="left:11px;top:1050px;" width="22" height="22" viewBox="0 0 22 22"><path d="M1 3.2l8-1.1v8.2H1zM10.3 1.9L21 0.4v9.9H10.3zM1 11.6h8v8.2l-8-1.1zM10.3 11.6H21v9.9l-10.7-1.5z" fill="#fff"/></svg>
<div class="a" style="left:45px;top:1042px;width:322px;height:38px;background:#303030;border:1px solid #4a4a4a;border-bottom:none"></div>
<svg style="left:58px;top:1048px;" width="22" height="26" viewBox="0 0 22 26"><circle cx="14.5" cy="9.2" r="6.5" fill="none" stroke="#e0e0e0" stroke-width="1.5"/><path d="M9.8 13.9L2.5 21.5" stroke="#e0e0e0" stroke-width="1.5"/></svg>
<div class="t" style="left:95.3px;top:1052.82px;font-size:17.7px;color:#d6d6d6;">Search</div>
<svg style="left:290px;top:1040px;" width="80" height="40" viewBox="0 0 80 40"><path d="M4 40L18 27H68L78 38V40z" fill="#dfb987"/><path d="M16 18L27 15.5L34 13L39 27.5L20 33.5z" fill="#f1eff8"/><path d="M16 18L20 33.5L20.5 35.5L16.5 20z" fill="#7ab87a"/><path d="M20 33.5L39 27.5L39.6 29.5L20.6 35.6z" fill="#4f9a55"/><path d="M27 15.5L30.5 31.5" stroke="#d6cfe6" stroke-width="1"/><path d="M20 22l5-1.5M21 25l5-1.5M31 19l4-1M32 22l4-1" stroke="#c8c8d8" stroke-width="0.8"/><path d="M32 22.5L41.5 10.5L44 12.5L34.5 24.5z" fill="#e6b032"/><path d="M41.5 10.5L43.5 8.5L46 10.5L44 12.5z" fill="#e88a80"/><path d="M49.5 16.5C49.5 9.5 53 6 59 6C65 6 68.5 9.5 68.5 16.5V31C68.5 33.5 66.5 35 64 35H54C51.5 35 49.5 33.5 49.5 31z" fill="#1a84f0"/><path d="M55 7C55.5 3.5 62.5 3.5 63 7" fill="none" stroke="#2a96f8" stroke-width="2"/><path d="M52 13C54 9 64 9 66 13" fill="none" stroke="#62c4ff" stroke-width="1"/><path d="M50.5 27C51.5 21.5 66.5 21.5 67.5 27V33.5H50.5z" fill="#1672e6"/><path d="M51 32H67" stroke="#a88af2" stroke-width="1.5"/><circle cx="51.8" cy="28" r="1" fill="#8fd8ff"/></svg>
<svg style="left:378px;top:1049px;" width="24" height="24" viewBox="0 0 24 24"><rect x="2.5" y="5.5" width="11" height="12" fill="none" stroke="#fff" stroke-width="1.4"/><path d="M1 2.5h14M1 20.5h14M19.5 1v21" stroke="#fff" stroke-width="1.4"/><rect x="18" y="8" width="3" height="3" fill="#fff"/></svg>
<svg style="left:426px;top:1050px;" width="22" height="22" viewBox="0 0 22 22"><path d="M1 8l10-7 10 7v12H1z" fill="#1b6fb6"/><path d="M1 8l10 7 10-7v12H1z" fill="#2a9ae8"/><path d="M1 8l10 7 10-7" fill="none" stroke="#fff" stroke-width="1"/><path d="M3 7h16l-8 5.5z" fill="#e8f3fc"/></svg>
<svg style="left:468px;top:1050px;" width="22" height="23" viewBox="0 0 22 23"><rect x="1" y="4" width="19.5" height="18" rx="2.5" fill="#f5f5f5"/><path d="M6 4V2.5a4.5 2 0 0 1 9.5 0V4" fill="none" stroke="#3a8ee6" stroke-width="1.3"/><rect x="6" y="8" width="4.5" height="4.5" fill="#e35a2b"/><rect x="11.5" y="8" width="4.5" height="4.5" fill="#6bb72f"/><rect x="6" y="13.5" width="4.5" height="4.5" fill="#2d9be0"/><rect x="11.5" y="13.5" width="4.5" height="4.5" fill="#f6b800"/></svg>
<svg style="left:509px;top:1050px;" width="22" height="22" viewBox="0 0 22 22"><circle cx="11" cy="12" r="9.5" fill="#ff6a2b"/><path d="M3 9c2-6 9-8 14-5 4 3 4 9 0 13" fill="#ffb12b"/><circle cx="11" cy="12.5" r="4.5" fill="#8a3ad0"/><path d="M2 10c0-4 3-7 5-8 0 3 2 4 4 4" fill="#ff3a50"/></svg>
<svg style="left:547px;top:1049px;" width="24" height="24" viewBox="0 0 24 24"><circle cx="12" cy="12" r="10.5" fill="#1f8ee0"/><path d="M3 13c0-7 6-11 11-10 5 1 8 5 7 9-1 3-5 3-7 1" fill="#3fd07a"/><path d="M8 15c0-4 4-6 8-5-2-3-8-4-11 0-3 4-1 10 4 12 4 1 8-1 10-3-5 2-11 0-11-4z" fill="#0e5fb5"/></svg>
<div class="t" style="left:573.7px;top:1053.70px;font-size:15px;color:#fff">ترجمة Goo...</div>
<div class="a" style="left:546px;top:1077px;width:113px;height:3px;background:#7ab6e8;"></div>
<svg style="left:673px;top:1050px;" width="20" height="22" viewBox="0 0 20 22"><path d="M2 3h6l2 2h8v15H2z" fill="#e8b43a"/><path d="M2 7h16v13H2z" fill="#f8d46a"/></svg>
<div class="t" style="left:697.5px;top:1054.38px;font-size:14.2px;color:#fff;">D02</div>
<div class="a" style="left:670px;top:1077px;width:114px;height:3px;background:#7ab6e8;"></div>
<div class="a" style="left:793px;top:1041px;width:41px;height:36px;background:#5b5a2e;"></div>
<div class="a" style="left:834px;top:1041px;width:73px;height:36px;background:#29282c;"></div>
<svg style="left:797px;top:1052px;" width="17" height="17" viewBox="0 0 17 17"><rect x="0" y="0" width="16" height="16" rx="1" fill="#7a3ee0"/><path d="M3 4l5 4-5 4zM13 4L8 8l5 4z" fill="#fff"/></svg>
<div class="t" style="left:821.7px;top:1054.89px;font-size:13.6px;color:#fff;">Power BI D...</div>
<div class="a" style="left:793px;top:1077px;width:114px;height:3px;background:#f2c811;"></div>
<div class="a" style="left:913px;top:1041px;width:122px;height:39px;background:#434243;"></div>
<div class="t" style="left:945.0px;top:1054.89px;font-size:13.6px;color:#fff;">Lab_2</div>
<div class="a" style="left:913px;top:1077px;width:122px;height:3px;background:#7ab6e8;"></div>
<svg style="left:1044px;top:1051px;" width="22" height="20" viewBox="0 0 22 20"><rect x="0" y="1" width="11" height="17" fill="#1d7044"/><path d="M2.5 5l6 9M8.5 5l-6 9" stroke="#fff" stroke-width="1.5"/><rect x="11" y="2" width="8" height="15" fill="none" stroke="#fff" stroke-width="1"/><path d="M11 6h8M11 10h8M11 14h8M15 2v15" stroke="#fff" stroke-width="0.9"/></svg>
<div class="t" style="left:1069.3px;top:1054.59px;font-size:13.95px;color:#fff;">Excel 2016</div>
<div class="a" style="left:1042px;top:1077px;width:103px;height:3px;background:#7ab6e8;"></div>
<div class="a" style="left:1145px;top:1077px;width:10px;height:3px;background:#5a6a7a;"></div>
<svg style="left:1168px;top:1051px;" width="22" height="20" viewBox="0 0 22 20"><rect x="0" y="1" width="12" height="17" fill="#2b579a"/><text x="6" y="14" font-size="11" font-weight="bold" font-family="Liberation Sans" fill="#fff" text-anchor="middle">W</text><rect x="12" y="3" width="7.5" height="13" fill="none" stroke="#fff" stroke-width="1"/><path d="M13.5 6.5h4.5M13.5 9.5h4.5M13.5 12.5h4.5" stroke="#fff" stroke-width="1"/></svg>
<div class="t" style="left:1193.3px;top:1054.66px;font-size:13.87px;color:#fff;">Lab 5.docx...</div>
<div class="a" style="left:1166px;top:1077px;width:113px;height:3px;background:#7ab6e8;"></div>
<svg style="left:1291px;top:1051px;" width="22" height="20" viewBox="0 0 22 20"><rect x="0" y="1" width="12" height="17" fill="#2b579a"/><text x="6" y="14" font-size="11" font-weight="bold" font-family="Liberation Sans" fill="#fff" text-anchor="middle">W</text><rect x="12" y="3" width="7.5" height="13" fill="none" stroke="#fff" stroke-width="1"/><path d="M13.5 6.5h4.5M13.5 9.5h4.5M13.5 12.5h4.5" stroke="#fff" stroke-width="1"/></svg>
<div class="t" style="left:1316.0px;top:1054.66px;font-size:13.87px;color:#fff;">Lab 6.docx...</div>
<div class="a" style="left:1289px;top:1077px;width:113px;height:3px;background:#7ab6e8;"></div>
<svg style="left:1445px;top:1046px;" width="34" height="30" viewBox="0 0 34 30"><defs><linearGradient id="mg" x1="0" y1="0" x2="1" y2="1"><stop offset="0" stop-color="#ffc84a"/><stop offset="1" stop-color="#f08a1c"/></linearGradient></defs><circle cx="17.5" cy="15.5" r="12.5" fill="url(#mg)"/><circle cx="12" cy="10" r="10" fill="#1d1b21"/><path d="M5 13a4 4 0 0 1 0.5-8 5 5 0 0 1 9.5 0.5 3.8 3.8 0 0 1 0.5 7.5z" fill="#b8d4f0"/></svg>
<div class="t" style="left:1488.2px;top:1053.59px;font-size:16.2px;color:#fff;">15°C</div>
<svg style="left:1546px;top:1054px;" width="20" height="13" viewBox="0 0 20 13"><path d="M2 10l8-8 8 8" fill="none" stroke="#fff" stroke-width="1.4"/></svg>
<svg style="left:1577px;top:1050px;" width="20" height="21" viewBox="0 0 20 21"><rect x="2.5" y="5.5" width="10" height="10" rx="2" fill="none" stroke="#fff" stroke-width="1.3"/><path d="M12.5 8.5l4-2.5v9l-4-2.5" fill="none" stroke="#fff" stroke-width="1.3"/><path d="M4 2.5a8 8 0 0 1 10 0M4 18.5a8 8 0 0 0 10 0" fill="none" stroke="#fff" stroke-width="1"/></svg>
<svg style="left:1605px;top:1053px;" width="22" height="15" viewBox="0 0 22 15"><rect x="5.5" y="3.5" width="14" height="9" fill="none" stroke="#fff" stroke-width="1.3"/><rect x="7.5" y="5.5" width="7" height="5" fill="#fff"/><path d="M19.5 6v4M1 5h4M3 3v4" stroke="#fff" stroke-width="1.5"/></svg>
<svg style="left:1637px;top:1052px;" width="20" height="18" viewBox="0 0 20 18"><path d="M2 15a14 14 0 0 1 14-13M5 15a11 11 0 0 1 11-10M8 15a8 8 0 0 1 8-7M11 15a5 5 0 0 1 5-4" fill="none" stroke="#fff" stroke-width="1.2"/><circle cx="16" cy="15" r="1.4" fill="#fff"/></svg>
<svg style="left:1665px;top:1050px;" width="24" height="21" viewBox="0 0 24 21"><path d="M2 7.5h4l5-5v16l-5-5H2z" fill="none" stroke="#fff" stroke-width="1.3"/><path d="M14 7a4 4 0 0 1 0 7M17 4.5a8 8 0 0 1 0 12M20 2a12 12 0 0 1 0 17" fill="none" stroke="#fff" stroke-width="1.2"/></svg>
<div class="a" style="left:1691px;top:1041px;width:40px;height:39px;background:#2e2d31;"></div>
<svg style="left:1699px;top:1049px;" width="24" height="24" viewBox="0 0 24 24"><path d="M4 20l12-15a2.5 2.5 0 0 1 3.5 3.5L6 21z" fill="none" stroke="#fff" stroke-width="1.3"/><path d="M2 14c4-5 8-4 9 0s5 2 10-2" fill="none" stroke="#fff" stroke-width="1.2"/></svg>
<div class="t" style="left:1739.8px;top:1056.13px;font-size:13.2px;color:#fff;">ENG</div>
<div class="t" style="left:1785.9px;top:1055.36px;font-size:14.1px;color:#fff;">11:39 PM</div>
<svg style="left:1866px;top:1049px;" width="25" height="24" viewBox="0 0 25 24"><path d="M2.5 2.5h19v15h-6l-4 4v-4h-9z" fill="none" stroke="#fff" stroke-width="1.3" stroke-linejoin="round"/><path d="M17 21a4 4 0 0 0 5-5" fill="none" stroke="#fff" stroke-width="1.2"/></svg>
<div class="a" style="left:1914px;top:1041px;width:1px;height:39px;background:#6a6a6a;"></div>
<svg style="left:0;top:0" width="1920" height="1080" viewBox="0 0 1920 1080"><g opacity="0.36" fill="none" stroke="#9d9d9d" stroke-width="10.5" stroke-linecap="round"><path d="M884 957.5V1007"/><path d="M868 981.5A16.5 16.5 0 1 0 884 1007"/><path d="M884 1007.2H1040" stroke-linecap="butt"/><circle cx="921" cy="990.5" r="15.2" stroke-width="10"/><path d="M962.5 987V1007"/><path d="M983.5 987V1007"/><path d="M1001.5 983V1007"/><path d="M1017.5 981V1007"/><circle cx="1053.4" cy="997.5" r="16" stroke-width="10"/></g><g opacity="0.36" fill="#9d9d9d"><circle cx="913.75" cy="958.75" r="5.8"/><circle cx="929.4" cy="958.75" r="5.8"/><circle cx="953.75" cy="973.1" r="5.8"/><circle cx="970" cy="973.1" r="5.8"/></g></svg>
<div class="t" style="left:845px;top:1018.51px;font-size:37.2px;font-weight:bold;color:#9d9d9d;opacity:0.36">mostaql.com</div>
<div class="a" style="left:0;top:200px;width:1920px;height:8px;background:linear-gradient(rgba(0,0,0,0.11),rgba(0,0,0,0))"></div>
</body></html>
